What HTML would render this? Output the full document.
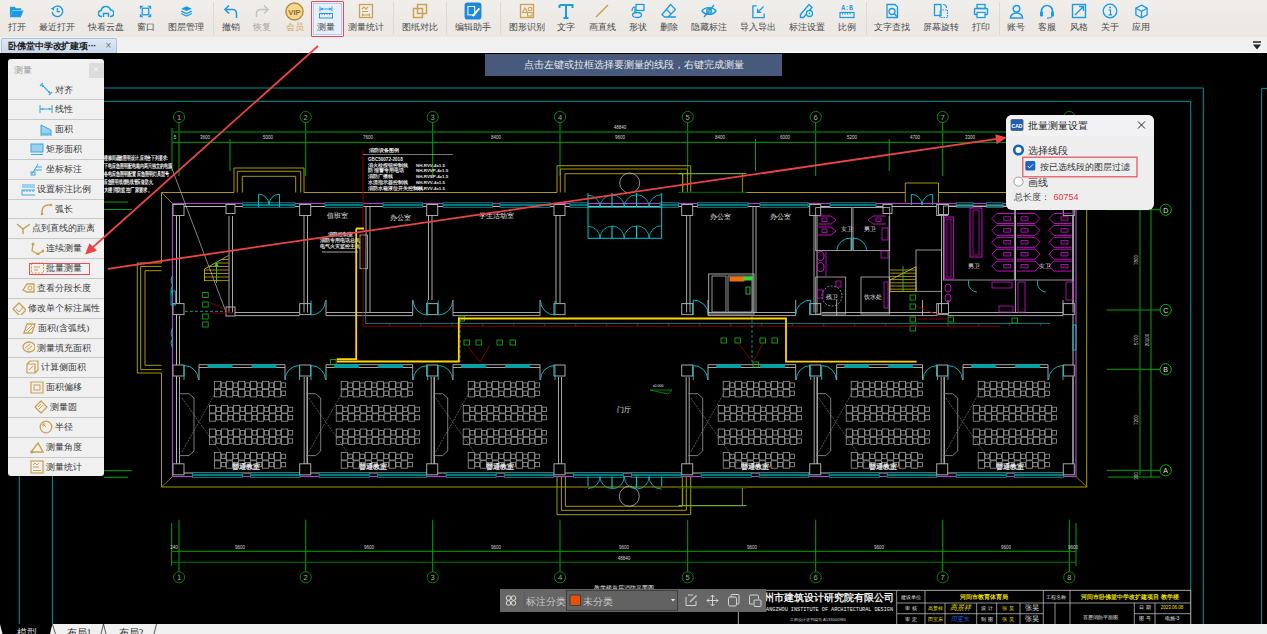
<!DOCTYPE html><html><head><meta charset="utf-8"><style>
*{margin:0;padding:0;box-sizing:border-box}
html,body{width:1267px;height:634px;overflow:hidden;background:#000;font-family:"Liberation Serif",serif}
#tb{position:absolute;left:0;top:0;width:1267px;height:37px;background:linear-gradient(#f0eeeb,#ebe7e2)}
.ic{position:absolute}
.lb{position:absolute;top:21.5px;font-size:9px;line-height:11px;color:#4a4a4a;white-space:nowrap;transform:translateX(-50%)}
.sep{position:absolute;top:2px;width:1px;height:33px;background:#dcd8d2}
#tabs{position:absolute;left:0;top:37px;width:1267px;height:16px;background:#f0f0f0;border-bottom:1px solid #fafafa}
#tab{position:absolute;left:1px;top:0.5px;width:115.5px;height:15.5px;background:linear-gradient(#dfe8f4,#c8d8ec);border:1px solid #a9c1df;border-bottom:none;border-radius:2px 2px 0 0;font-size:9.3px;font-weight:bold;color:#222;padding-left:6px;line-height:14px;white-space:nowrap;letter-spacing:-0.1px}
#tab span{position:absolute;left:103.5px;top:0;color:#777;font-weight:normal;font-family:"Liberation Sans",sans-serif;font-size:10px}
#cv{position:absolute;left:0;top:0}
#panel{position:absolute;left:7.5px;top:59px;width:96.5px;height:417px;background:#f0f0f0;border-radius:3px;overflow:hidden}
#panel .hd{position:absolute;left:6px;top:5px;font-size:9px;color:#9a9a9a}
#panel .cl{position:absolute;left:81px;top:4px;width:15px;height:15px;background:#dcdcdc;color:#f4f4f4;font-size:10px;text-align:center;line-height:14px;font-family:"Liberation Sans",sans-serif}
.row{position:absolute;left:0;width:96.5px;height:19.85px;border-top:1px solid #c8c8c8;font-size:9px;color:#3a3a3a;text-align:center;line-height:19px;white-space:nowrap}
.row svg{vertical-align:middle;margin-right:2px;position:relative;top:-1px}
#banner{position:absolute;left:485px;top:54px;width:297px;height:22px;background:#475a7c;color:#e6e9ef;font-size:10px;line-height:22px;text-align:center}
#dlg{position:absolute;left:1006px;top:115px;width:148px;height:95px;background:#eeeeee;border-radius:6px;overflow:hidden;font-family:"Liberation Sans",sans-serif}
#dlg .tt{position:absolute;left:0;top:0;width:148px;height:21px;background:#f2f2f4}
#bt{position:absolute;left:500px;top:589px;width:266px;height:23px;background:#666666}
#btabs{position:absolute;left:0;top:624px;width:1267px;height:10px;background:#f0f0f0}
</style></head><body>

<div id="tb">
<svg class="ic" style="left:9.0px;top:3.5px" width="15" height="15" viewBox="0 0 16 16"><path d="M1 3h5l1.5 1.5H13v2H4L1 14z" fill="#1a9be6"/><path d="M4 7h11.5l-3 7H1z" fill="#1a9be6"/></svg>
<div class="lb" style="left:16.5px;color:#4a4a4a">打开</div>
<svg class="ic" style="left:49.6px;top:4.0px" width="14" height="14" viewBox="0 0 16 16"><path d="M3.2 5.5A6 6 0 1 1 2.5 9" fill="none" stroke="#1a9be6" stroke-width="1.6"/><path d="M0.8 5l3.5-1.2 .3 3.6z" fill="#1a9be6"/><path d="M8.5 4.5v4.2h3" fill="none" stroke="#1a9be6" stroke-width="1.6"/></svg>
<div class="lb" style="left:56.6px;color:#4a4a4a">最近打开</div>
<svg class="ic" style="left:97.7px;top:3.0px" width="16" height="16" viewBox="0 0 16 16"><path d="M4 13.5H3.5a3 3 0 0 1-.3-6 4.8 4.8 0 0 1 9.3-.5 3.2 3.2 0 0 1 .2 6.5H12" fill="none" stroke="#1a9be6" stroke-width="1.5"/><path d="M5.5 14V10.5h5V14" fill="none" stroke="#1a9be6" stroke-width="1.4"/></svg>
<div class="lb" style="left:105.7px;color:#4a4a4a">快看云盘</div>
<svg class="ic" style="left:139.2px;top:4.5px" width="13" height="13" viewBox="0 0 16 16"><path d="M1 1h4.5L1 5.5zM15 1h-4.5L15 5.5zM1 15h4.5L1 10.5zM15 15h-4.5L15 10.5z" fill="#1a9be6"/><rect x="4" y="4" width="8" height="8" fill="none" stroke="#1a9be6" stroke-width="1.6"/></svg>
<div class="lb" style="left:145.7px;color:#4a4a4a">窗口</div>
<svg class="ic" style="left:179.5px;top:4.5px" width="13" height="13" viewBox="0 0 16 16"><path d="M8 1.5l6.5 3-6.5 3-6.5-3z" fill="#1a9be6"/><path d="M1.5 7.5l6.5 3 6.5-3M1.5 10.5l6.5 3 6.5-3" fill="none" stroke="#1a9be6" stroke-width="1.6"/></svg>
<div class="lb" style="left:186.0px;color:#4a4a4a">图层管理</div>
<div class="sep" style="left:213.0px"></div>
<svg class="ic" style="left:222.7px;top:3.0px" width="16" height="16" viewBox="0 0 16 16"><path d="M2 6.5h7.5a4 4 0 0 1 4 4V15" fill="none" stroke="#1a9be6" stroke-width="1.6"/><path d="M6 2.5L2 6.5l4 4" fill="none" stroke="#1a9be6" stroke-width="1.6"/></svg>
<div class="lb" style="left:230.7px;color:#4a4a4a">撤销</div>
<svg class="ic" style="left:254.0px;top:3.0px" width="16" height="16" viewBox="0 0 16 16"><path d="M14 6.5H6.5a4 4 0 0 0-4 4V14" fill="none" stroke="#c4c4c4" stroke-width="1.6"/><path d="M10 2.5l4 4-4 4" fill="none" stroke="#c4c4c4" stroke-width="1.6"/></svg>
<div class="lb" style="left:262.0px;color:#a8a8a8">恢复</div>
<svg class="ic" style="left:285.0px;top:1.5px" width="19" height="19" viewBox="0 0 16 16"><circle cx="8" cy="8" r="7.2" fill="#f3d890" stroke="#b58a3a" stroke-width="1.2"/><text x="8" y="10.6" font-size="6.5" font-family="Liberation Sans" font-weight="bold" fill="#9a6b1c" text-anchor="middle">VIP</text></svg>
<div class="lb" style="left:294.5px;color:#d0a860">会员</div>
<div style="position:absolute;left:310.5px;top:1px;width:33.5px;height:35.5px;border:1.5px solid #ee4b55;background:#e8effa;border-radius:1px"></div>
<div style="position:absolute;left:312.5px;top:3px;width:29.5px;height:31.5px;border:1px solid #b9cdea"></div>
<svg class="ic" style="left:318.0px;top:3.0px" width="16" height="16" viewBox="0 0 16 16"><path d="M2.5 6h11M2 3.5v5M14 3.5v5" fill="none" stroke="#1a9be6" stroke-width="0.9"/><path d="M2.5 6l2.2-1.4v2.8zM13.5 6l-2.2-1.4v2.8z" fill="#1a9be6"/><rect x="1.5" y="10.5" width="13" height="4.5" fill="none" stroke="#1a9be6" stroke-width="1"/><path d="M4 10.5v1.6M6.5 10.5v1.6M9 10.5v1.6M11.5 10.5v1.6" stroke="#1a9be6" stroke-width="0.8"/></svg>
<div class="lb" style="left:326.0px;color:#4a4a4a">测量</div>
<svg class="ic" style="left:358.0px;top:3.0px" width="16" height="16" viewBox="0 0 16 16"><rect x="1.5" y="1.5" width="13" height="13" fill="none" stroke="#c9a253" stroke-width="1.3"/><path d="M4 6l2-2 2 2 2-2M4 8.5h6M4 12h8M4.5 10.5v3M11.5 10.5v3" fill="none" stroke="#c9a253" stroke-width="1.1"/></svg>
<div class="lb" style="left:366.0px;color:#4a4a4a">测量统计</div>
<div class="sep" style="left:392.5px"></div>
<svg class="ic" style="left:411.5px;top:3.0px" width="16" height="16" viewBox="0 0 16 16"><rect x="1.5" y="5.5" width="9" height="9" fill="none" stroke="#c9a253" stroke-width="1.5"/><rect x="5.5" y="1.5" width="9" height="9" fill="none" stroke="#c9a253" stroke-width="1.5"/></svg>
<div class="lb" style="left:419.5px;color:#4a4a4a">图纸对比</div>
<div class="sep" style="left:446.0px"></div>
<svg class="ic" style="left:464.0px;top:2.0px" width="18" height="18" viewBox="0 0 16 16"><rect x="0.5" y="0.5" width="15" height="15" rx="2.5" fill="#1e88d8"/><rect x="3.5" y="4" width="6" height="7.5" fill="none" stroke="#fff" stroke-width="0.9"/><path d="M7 12l6-7 1.3 1.2-6 7z" fill="#fff"/></svg>
<div class="lb" style="left:473.0px;color:#4a4a4a">编辑助手</div>
<div class="sep" style="left:499.5px"></div>
<svg class="ic" style="left:518.7px;top:3.0px" width="16" height="16" viewBox="0 0 16 16"><rect x="1.5" y="1.5" width="13" height="13" fill="none" stroke="#c9a253" stroke-width="1.3"/><path d="M3.5 9.5l2.5-4.5 2.5 4.5z" fill="none" stroke="#c9a253" stroke-width="1.1"/><circle cx="11" cy="6" r="1.8" fill="none" stroke="#c9a253" stroke-width="1.1"/><rect x="8.5" y="9.5" width="4.5" height="3.5" fill="none" stroke="#c9a253" stroke-width="1.1"/></svg>
<div class="lb" style="left:526.7px;color:#4a4a4a">图形识别</div>
<svg class="ic" style="left:558.0px;top:3.0px" width="16" height="16" viewBox="0 0 16 16"><path d="M1.5 2h13v3M1.5 2v3M8 2v13M5.5 15h5" fill="none" stroke="#1a9be6" stroke-width="2"/></svg>
<div class="lb" style="left:566.0px;color:#4a4a4a">文字</div>
<svg class="ic" style="left:594.0px;top:3.0px" width="16" height="16" viewBox="0 0 16 16"><path d="M2 14L14 2" stroke="#c9a253" stroke-width="1.5"/></svg>
<div class="lb" style="left:602.0px;color:#4a4a4a">画直线</div>
<svg class="ic" style="left:629.5px;top:3.0px" width="16" height="16" viewBox="0 0 16 16"><path d="M2 8c0-3 2-5 3-3s-2 4 1 3" fill="none" stroke="#1a9be6" stroke-width="1.2"/><rect x="6" y="1.5" width="8" height="6" fill="none" stroke="#1a9be6" stroke-width="1.3"/><ellipse cx="7" cy="12" rx="4.5" ry="2.5" fill="none" stroke="#1a9be6" stroke-width="1.3"/></svg>
<div class="lb" style="left:637.5px;color:#4a4a4a">形状</div>
<svg class="ic" style="left:660.7px;top:3.0px" width="16" height="16" viewBox="0 0 16 16"><path d="M9.5 1.5l5 5-7.5 7.5H3.5l-2.5-2.5z" fill="none" stroke="#1a9be6" stroke-width="1.3"/><path d="M5 6l5 5M7 14h8" stroke="#1a9be6" stroke-width="1.3"/></svg>
<div class="lb" style="left:668.7px;color:#4a4a4a">删除</div>
<svg class="ic" style="left:701.0px;top:3.0px" width="16" height="16" viewBox="0 0 16 16"><path d="M1 8c3-4.5 11-4.5 14 0-3 4.5-11 4.5-14 0z" fill="none" stroke="#1a9be6" stroke-width="1.4"/><circle cx="8" cy="8" r="2.3" fill="none" stroke="#1a9be6" stroke-width="1.4"/><path d="M3 14L13 2" stroke="#1a9be6" stroke-width="1.4"/></svg>
<div class="lb" style="left:709.0px;color:#4a4a4a">隐藏标注</div>
<svg class="ic" style="left:750.5px;top:3.5px" width="15" height="15" viewBox="0 0 16 16"><path d="M6 2H2v12.5h12V10" fill="none" stroke="#1a9be6" stroke-width="1.4"/><path d="M13.5 2.5L7 9M7 5v4h4" fill="none" stroke="#1a9be6" stroke-width="1.4"/></svg>
<div class="lb" style="left:758.0px;color:#4a4a4a">导入导出</div>
<svg class="ic" style="left:799.0px;top:3.0px" width="16" height="16" viewBox="0 0 16 16"><path d="M10 1.5l3 3-8.5 10H1.5v-3z" fill="none" stroke="#1a9be6" stroke-width="1.4"/><circle cx="10.5" cy="10.5" r="3" fill="#fff" stroke="#1a9be6" stroke-width="1.3"/><circle cx="10.5" cy="10.5" r="1" fill="#1a9be6"/></svg>
<div class="lb" style="left:807.0px;color:#4a4a4a">标注设置</div>
<svg class="ic" style="left:839.0px;top:3.0px" width="16" height="16" viewBox="0 0 16 16"><text x="8" y="7" font-size="6.5" font-family="Liberation Mono" font-weight="bold" fill="#1a9be6" text-anchor="middle">A:B</text><rect x="1" y="9.5" width="14" height="5" fill="none" stroke="#1a9be6" stroke-width="1.2"/><path d="M3.5 9.5v2M6 9.5v2M8.5 9.5v2M11 9.5v2" stroke="#1a9be6" stroke-width="1"/></svg>
<div class="lb" style="left:847.0px;color:#4a4a4a">比例</div>
<div class="sep" style="left:865.5px"></div>
<svg class="ic" style="left:883.7px;top:3.0px" width="16" height="16" viewBox="0 0 16 16"><path d="M3 1.5h8l2.5 2.5v10.5H3z" fill="none" stroke="#1a9be6" stroke-width="1.3"/><circle cx="8" cy="8.5" r="3" fill="none" stroke="#1a9be6" stroke-width="1.3"/><path d="M10.2 10.7l3.5 3.5" stroke="#1a9be6" stroke-width="1.5"/></svg>
<div class="lb" style="left:891.7px;color:#4a4a4a">文字查找</div>
<svg class="ic" style="left:933.0px;top:3.0px" width="16" height="16" viewBox="0 0 16 16"><rect x="1.5" y="1.5" width="6.5" height="11" fill="none" stroke="#1a9be6" stroke-width="1.3"/><rect x="7" y="7" width="7.5" height="7.5" fill="none" stroke="#1a9be6" stroke-width="1.2" stroke-dasharray="1.5 1"/><path d="M10 1.5a3.5 3.5 0 0 1 3.5 3.5" fill="none" stroke="#1a9be6" stroke-width="1.2"/></svg>
<div class="lb" style="left:941.0px;color:#4a4a4a">屏幕旋转</div>
<svg class="ic" style="left:973.0px;top:3.0px" width="16" height="16" viewBox="0 0 16 16"><rect x="4" y="1.5" width="8" height="4" fill="none" stroke="#1a9be6" stroke-width="1.3"/><rect x="1.5" y="5.5" width="13" height="6" rx="1" fill="none" stroke="#1a9be6" stroke-width="1.4"/><rect x="4" y="9.5" width="8" height="5" fill="#fff" stroke="#1a9be6" stroke-width="1.3"/></svg>
<div class="lb" style="left:981.0px;color:#4a4a4a">打印</div>
<div class="sep" style="left:998.6px"></div>
<svg class="ic" style="left:1008.5px;top:3.5px" width="15" height="15" viewBox="0 0 16 16"><circle cx="8" cy="5" r="3.5" fill="none" stroke="#1a9be6" stroke-width="1.6"/><path d="M1.5 15a6.5 5.5 0 0 1 13 0z" fill="none" stroke="#1a9be6" stroke-width="1.6"/></svg>
<div class="lb" style="left:1016.0px;color:#4a4a4a">账号</div>
<svg class="ic" style="left:1039.0px;top:3.0px" width="16" height="16" viewBox="0 0 16 16"><path d="M2.5 10V8a5.5 5.5 0 0 1 11 0v2" fill="none" stroke="#1a9be6" stroke-width="1.6"/><rect x="1" y="8.5" width="3" height="5" rx="1" fill="#1a9be6"/><rect x="12" y="8.5" width="3" height="5" rx="1" fill="#1a9be6"/><path d="M13 13c0 2-3 2.2-5 2.2" fill="none" stroke="#1a9be6" stroke-width="1.2"/></svg>
<div class="lb" style="left:1047.0px;color:#4a4a4a">客服</div>
<svg class="ic" style="left:1070.5px;top:3.0px" width="16" height="16" viewBox="0 0 16 16"><rect x="1.5" y="1.5" width="13" height="13" fill="none" stroke="#1a9be6" stroke-width="1.4"/><path d="M4 12L12.5 3.5M8 3.5h4.5V8" fill="none" stroke="#1a9be6" stroke-width="1.4"/></svg>
<div class="lb" style="left:1078.5px;color:#4a4a4a">风格</div>
<svg class="ic" style="left:1102.0px;top:3.0px" width="16" height="16" viewBox="0 0 16 16"><circle cx="8" cy="8" r="6.8" fill="none" stroke="#1a9be6" stroke-width="1.3"/><circle cx="8" cy="4.6" r="1" fill="#1a9be6"/><path d="M6.5 7h2v4.5M6.5 11.8h3.5" fill="none" stroke="#1a9be6" stroke-width="1.2"/></svg>
<div class="lb" style="left:1110.0px;color:#4a4a4a">关于</div>
<svg class="ic" style="left:1133.5px;top:3.5px" width="15" height="15" viewBox="0 0 16 16"><path d="M8 1.2l6 3.3v7L8 14.8 2 11.5v-7z" fill="none" stroke="#1a9be6" stroke-width="1.4"/><path d="M2 4.5l6 3.3 6-3.3M8 7.8v7" fill="none" stroke="#1a9be6" stroke-width="1.4"/></svg>
<div class="lb" style="left:1141.0px;color:#4a4a4a">应用</div>
</div>
<div id="tabs"><div id="tab">卧佛堂中学改扩建项<i style="font-style:normal;letter-spacing:-0.5px;font-family:Liberation Sans">···</i><span>×</span></div>
<svg style="position:absolute;left:1252px;top:4px" width="10" height="9"><path d="M1 1h8" stroke="#222" stroke-width="1.5"/><path d="M1 3.5h8L5 8.5z" fill="#222"/></svg></div>
<svg id="cv" width="1267" height="634" style="position:absolute;left:0;top:0" shape-rendering="auto">
<defs>
<pattern id="desk" width="12" height="8" patternUnits="userSpaceOnUse"><rect x="0.5" y="0.5" width="6" height="7" fill="none" stroke="#9a9a9a" stroke-width="0.8"/><rect x="7" y="2" width="4" height="4" fill="none" stroke="#9a9a9a" stroke-width="0.8"/></pattern>
</defs>
<rect x="0" y="53" width="1267" height="571" fill="#000"/>
<g font-family="Liberation Sans, sans-serif">
<path d="M19.3 624V88H1203.3V624" stroke="#009498" stroke-width="1" fill="none" />
<path d="M52.4 624V101.3H1190.7V624" stroke="#009498" stroke-width="1" fill="none" />
<path d="M1267 88.4H1261.6V624" stroke="#009498" stroke-width="1" fill="none" />
<circle cx="179" cy="117" r="5.6" stroke="#009400" stroke-width="0.9" fill="none"/>
<text x="179.0" y="119.8" font-size="7.5" fill="#a8a8a8" text-anchor="middle" >1</text>
<circle cx="179" cy="577.3" r="5.6" stroke="#009400" stroke-width="0.9" fill="none"/>
<text x="179.0" y="580.1" font-size="7.5" fill="#a8a8a8" text-anchor="middle" >1</text>
<line x1="179.0" y1="122.6" x2="179.0" y2="176.0" stroke="#00a400" stroke-width="1" />
<line x1="179.0" y1="519.7" x2="179.0" y2="571.7" stroke="#00a400" stroke-width="1" />
<circle cx="305.7" cy="117" r="5.6" stroke="#009400" stroke-width="0.9" fill="none"/>
<text x="305.7" y="119.8" font-size="7.5" fill="#a8a8a8" text-anchor="middle" >2</text>
<circle cx="305.7" cy="577.3" r="5.6" stroke="#009400" stroke-width="0.9" fill="none"/>
<text x="305.7" y="580.1" font-size="7.5" fill="#a8a8a8" text-anchor="middle" >2</text>
<line x1="305.7" y1="122.6" x2="305.7" y2="176.0" stroke="#00a400" stroke-width="1" />
<line x1="305.7" y1="519.7" x2="305.7" y2="571.7" stroke="#00a400" stroke-width="1" />
<circle cx="432.7" cy="117" r="5.6" stroke="#009400" stroke-width="0.9" fill="none"/>
<text x="432.7" y="119.8" font-size="7.5" fill="#a8a8a8" text-anchor="middle" >3</text>
<circle cx="432.7" cy="577.3" r="5.6" stroke="#009400" stroke-width="0.9" fill="none"/>
<text x="432.7" y="580.1" font-size="7.5" fill="#a8a8a8" text-anchor="middle" >3</text>
<line x1="432.7" y1="122.6" x2="432.7" y2="176.0" stroke="#00a400" stroke-width="1" />
<line x1="432.7" y1="519.7" x2="432.7" y2="571.7" stroke="#00a400" stroke-width="1" />
<circle cx="560" cy="117" r="5.6" stroke="#009400" stroke-width="0.9" fill="none"/>
<text x="560.0" y="119.8" font-size="7.5" fill="#a8a8a8" text-anchor="middle" >4</text>
<circle cx="560" cy="577.3" r="5.6" stroke="#009400" stroke-width="0.9" fill="none"/>
<text x="560.0" y="580.1" font-size="7.5" fill="#a8a8a8" text-anchor="middle" >4</text>
<line x1="560.0" y1="122.6" x2="560.0" y2="176.0" stroke="#00a400" stroke-width="1" />
<line x1="560.0" y1="519.7" x2="560.0" y2="571.7" stroke="#00a400" stroke-width="1" />
<circle cx="687.7" cy="117" r="5.6" stroke="#009400" stroke-width="0.9" fill="none"/>
<text x="687.7" y="119.8" font-size="7.5" fill="#a8a8a8" text-anchor="middle" >5</text>
<circle cx="687.7" cy="577.3" r="5.6" stroke="#009400" stroke-width="0.9" fill="none"/>
<text x="687.7" y="580.1" font-size="7.5" fill="#a8a8a8" text-anchor="middle" >5</text>
<line x1="687.7" y1="122.6" x2="687.7" y2="176.0" stroke="#00a400" stroke-width="1" />
<line x1="687.7" y1="519.7" x2="687.7" y2="571.7" stroke="#00a400" stroke-width="1" />
<circle cx="815.7" cy="117" r="5.6" stroke="#009400" stroke-width="0.9" fill="none"/>
<text x="815.7" y="119.8" font-size="7.5" fill="#a8a8a8" text-anchor="middle" >6</text>
<circle cx="815.7" cy="577.3" r="5.6" stroke="#009400" stroke-width="0.9" fill="none"/>
<text x="815.7" y="580.1" font-size="7.5" fill="#a8a8a8" text-anchor="middle" >6</text>
<line x1="815.7" y1="122.6" x2="815.7" y2="176.0" stroke="#00a400" stroke-width="1" />
<line x1="815.7" y1="519.7" x2="815.7" y2="571.7" stroke="#00a400" stroke-width="1" />
<circle cx="942.7" cy="117" r="5.6" stroke="#009400" stroke-width="0.9" fill="none"/>
<text x="942.7" y="119.8" font-size="7.5" fill="#a8a8a8" text-anchor="middle" >7</text>
<circle cx="942.7" cy="577.3" r="5.6" stroke="#009400" stroke-width="0.9" fill="none"/>
<text x="942.7" y="580.1" font-size="7.5" fill="#a8a8a8" text-anchor="middle" >7</text>
<line x1="942.7" y1="122.6" x2="942.7" y2="176.0" stroke="#00a400" stroke-width="1" />
<line x1="942.7" y1="519.7" x2="942.7" y2="571.7" stroke="#00a400" stroke-width="1" />
<circle cx="1069.3" cy="117" r="5.6" stroke="#009400" stroke-width="0.9" fill="none"/>
<text x="1069.3" y="119.8" font-size="7.5" fill="#a8a8a8" text-anchor="middle" >8</text>
<circle cx="1069.3" cy="577.3" r="5.6" stroke="#009400" stroke-width="0.9" fill="none"/>
<text x="1069.3" y="580.1" font-size="7.5" fill="#a8a8a8" text-anchor="middle" >8</text>
<line x1="1069.3" y1="122.6" x2="1069.3" y2="176.0" stroke="#00a400" stroke-width="1" />
<line x1="1069.3" y1="519.7" x2="1069.3" y2="571.7" stroke="#00a400" stroke-width="1" />
<line x1="172.0" y1="128.0" x2="172.0" y2="171.0" stroke="#00a400" stroke-width="1" />
<line x1="230.0" y1="139.0" x2="230.0" y2="171.0" stroke="#00a400" stroke-width="1" />
<line x1="755.5" y1="139.0" x2="755.5" y2="171.0" stroke="#00a400" stroke-width="1" />
<line x1="889.2" y1="139.0" x2="889.2" y2="171.0" stroke="#00a400" stroke-width="1" />
<line x1="172.0" y1="132.0" x2="1010.0" y2="132.0" stroke="#006c00" stroke-width="1.4" />
<line x1="172.0" y1="142.3" x2="1010.0" y2="142.3" stroke="#00a400" stroke-width="1" />
<line x1="171.7" y1="551.3" x2="1076.0" y2="551.3" stroke="#00a400" stroke-width="1" />
<line x1="171.7" y1="562.3" x2="1076.0" y2="562.3" stroke="#008000" stroke-width="1.1" />
<line x1="171.7" y1="523.0" x2="171.7" y2="566.0" stroke="#00a400" stroke-width="1" />
<line x1="1076.0" y1="523.0" x2="1076.0" y2="566.0" stroke="#00a400" stroke-width="1" />
<text x="175.0" y="139.0" font-size="4.5" fill="#d8d8d8" text-anchor="middle" >5</text>
<text x="205.0" y="139.0" font-size="4.5" fill="#d8d8d8" text-anchor="middle" >3600</text>
<text x="268.0" y="139.0" font-size="4.5" fill="#d8d8d8" text-anchor="middle" >5000</text>
<text x="368.0" y="139.0" font-size="4.5" fill="#d8d8d8" text-anchor="middle" >7600</text>
<text x="496.0" y="139.0" font-size="4.5" fill="#d8d8d8" text-anchor="middle" >8400</text>
<text x="620.0" y="139.0" font-size="4.5" fill="#d8d8d8" text-anchor="middle" >9600</text>
<text x="720.0" y="139.0" font-size="4.5" fill="#d8d8d8" text-anchor="middle" >8400</text>
<text x="785.0" y="139.0" font-size="4.5" fill="#d8d8d8" text-anchor="middle" >6000</text>
<text x="852.0" y="139.0" font-size="4.5" fill="#d8d8d8" text-anchor="middle" >5200</text>
<text x="915.0" y="139.0" font-size="4.5" fill="#d8d8d8" text-anchor="middle" >4700</text>
<text x="970.0" y="139.0" font-size="4.5" fill="#d8d8d8" text-anchor="middle" >3300</text>
<text x="620.0" y="129.0" font-size="4.5" fill="#d8d8d8" text-anchor="middle" >48840</text>
<text x="174.0" y="549.0" font-size="4.5" fill="#d8d8d8" text-anchor="middle" >240</text>
<text x="240.0" y="549.0" font-size="4.5" fill="#d8d8d8" text-anchor="middle" >9600</text>
<text x="369.0" y="549.0" font-size="4.5" fill="#d8d8d8" text-anchor="middle" >9600</text>
<text x="496.0" y="549.0" font-size="4.5" fill="#d8d8d8" text-anchor="middle" >9600</text>
<text x="624.0" y="549.0" font-size="4.5" fill="#d8d8d8" text-anchor="middle" >9600</text>
<text x="752.0" y="549.0" font-size="4.5" fill="#d8d8d8" text-anchor="middle" >9600</text>
<text x="879.0" y="549.0" font-size="4.5" fill="#d8d8d8" text-anchor="middle" >9600</text>
<text x="1006.0" y="549.0" font-size="4.5" fill="#d8d8d8" text-anchor="middle" >9600</text>
<text x="1073.0" y="549.0" font-size="4.5" fill="#d8d8d8" text-anchor="middle" >9600</text>
<text x="624.0" y="560.0" font-size="4.5" fill="#d8d8d8" text-anchor="middle" >48840</text>
<circle cx="1165.7" cy="209.7" r="5.6" stroke="#00b800" stroke-width="1" fill="none"/>
<text x="1165.7" y="212.5" font-size="7" fill="#e0e0e0" text-anchor="middle" >D</text>
<line x1="1106.7" y1="209.7" x2="1160.0" y2="209.7" stroke="#00a400" stroke-width="1" />
<circle cx="1165.7" cy="310" r="5.6" stroke="#00b800" stroke-width="1" fill="none"/>
<text x="1165.7" y="312.8" font-size="7" fill="#e0e0e0" text-anchor="middle" >C</text>
<line x1="1106.7" y1="310.0" x2="1160.0" y2="310.0" stroke="#00a400" stroke-width="1" />
<circle cx="1165.7" cy="369.3" r="5.6" stroke="#00b800" stroke-width="1" fill="none"/>
<text x="1165.7" y="372.1" font-size="7" fill="#e0e0e0" text-anchor="middle" >B</text>
<line x1="1106.7" y1="369.3" x2="1160.0" y2="369.3" stroke="#00a400" stroke-width="1" />
<circle cx="1165.7" cy="470.3" r="5.6" stroke="#00b800" stroke-width="1" fill="none"/>
<text x="1165.7" y="473.1" font-size="7" fill="#e0e0e0" text-anchor="middle" >A</text>
<line x1="1106.7" y1="470.3" x2="1160.0" y2="470.3" stroke="#00a400" stroke-width="1" />
<line x1="1140.0" y1="200.0" x2="1140.0" y2="475.0" stroke="#00a400" stroke-width="1" />
<line x1="1151.0" y1="200.0" x2="1151.0" y2="477.0" stroke="#00a400" stroke-width="1" />
<line x1="1108.0" y1="477.0" x2="1160.0" y2="477.0" stroke="#00a400" stroke-width="1" />
<text x="1138" y="260" font-size="4.5" fill="#d8d8d8" text-anchor="middle" transform="rotate(-90 1138 260)">7800</text>
<text x="1138" y="340" font-size="4.5" fill="#d8d8d8" text-anchor="middle" transform="rotate(-90 1138 340)">5700</text>
<text x="1149" y="340" font-size="4.5" fill="#d8d8d8" text-anchor="middle" transform="rotate(-90 1149 340)">20100</text>
<text x="1138" y="420" font-size="4.5" fill="#d8d8d8" text-anchor="middle" transform="rotate(-90 1138 420)">7200</text>
<text x="1138" y="476" font-size="4.5" fill="#d8d8d8" text-anchor="middle" transform="rotate(-90 1138 476)">300</text>
<text x="390.0" y="325.5" font-size="4" fill="#009498" text-anchor="middle" >L</text>
<text x="421.0" y="325.5" font-size="4" fill="#009498" text-anchor="middle" >L</text>
<text x="452.0" y="325.5" font-size="4" fill="#009498" text-anchor="middle" >L</text>
<text x="483.0" y="325.5" font-size="4" fill="#009498" text-anchor="middle" >L</text>
<text x="514.0" y="325.5" font-size="4" fill="#009498" text-anchor="middle" >L</text>
<text x="545.0" y="325.5" font-size="4" fill="#009498" text-anchor="middle" >L</text>
<text x="576.0" y="325.5" font-size="4" fill="#009498" text-anchor="middle" >L</text>
<text x="607.0" y="325.5" font-size="4" fill="#009498" text-anchor="middle" >L</text>
<text x="638.0" y="325.5" font-size="4" fill="#009498" text-anchor="middle" >L</text>
<text x="669.0" y="325.5" font-size="4" fill="#009498" text-anchor="middle" >L</text>
<text x="700.0" y="325.5" font-size="4" fill="#009498" text-anchor="middle" >L</text>
<text x="731.0" y="325.5" font-size="4" fill="#009498" text-anchor="middle" >L</text>
<text x="762.0" y="325.5" font-size="4" fill="#009498" text-anchor="middle" >L</text>
<text x="793.0" y="325.5" font-size="4" fill="#009498" text-anchor="middle" >L</text>
<text x="824.0" y="325.5" font-size="4" fill="#009498" text-anchor="middle" >L</text>
<text x="855.0" y="325.5" font-size="4" fill="#009498" text-anchor="middle" >L</text>
<text x="886.0" y="325.5" font-size="4" fill="#009498" text-anchor="middle" >L</text>
<text x="917.0" y="325.5" font-size="4" fill="#009498" text-anchor="middle" >L</text>
<text x="948.0" y="325.5" font-size="4" fill="#009498" text-anchor="middle" >L</text>
<text x="979.0" y="325.5" font-size="4" fill="#009498" text-anchor="middle" >L</text>
<text x="1010.0" y="325.5" font-size="4" fill="#009498" text-anchor="middle" >L</text>
<text x="1041.0" y="325.5" font-size="4" fill="#009498" text-anchor="middle" >L</text>
<path d="M161.5 192.5H234M304 192.5H557M690.7 192.5H905M938.3 192.5H1086.7V487H161.5V373M161.5 263V192.5" stroke="#a89a00" stroke-width="1" fill="none" />
<path d="M161.5 192.5L172.5 203.5M1086.7 192.5L1076 203.5M161.5 487L172.5 476.5M1086.7 487L1076 476.5" stroke="#a89a00" stroke-width="0.8" fill="none" />
<path d="M234.0 192.5V168.0H304.0V192.5" stroke="#a89a00" stroke-width="1" fill="none" />
<path d="M237.3 192.5V171.3H300.7V192.5" stroke="#a89a00" stroke-width="1" fill="none" />
<path d="M242.3 192.5V176.3H295.7V192.5" stroke="#a89a00" stroke-width="1" fill="none" />
<path d="M557.0 192.5V165.7H690.7V192.5" stroke="#a89a00" stroke-width="1" fill="none" />
<path d="M560.3 192.5V169.0H687.4V192.5" stroke="#a89a00" stroke-width="1" fill="none" />
<path d="M565.0 192.5V173.7H682.7V192.5" stroke="#a89a00" stroke-width="1" fill="none" />
<path d="M905.3 202.5V183H938.5V202.5" stroke="#a89a00" stroke-width="1" fill="none" />
<path d="M557.0 476.5V514.7H690.7V476.5" stroke="#a89a00" stroke-width="1" fill="none" />
<path d="M561.4 476.5V510.3H686.3V476.5" stroke="#a89a00" stroke-width="1" fill="none" />
<path d="M565.4 476.5V506.3H682.3V476.5" stroke="#a89a00" stroke-width="1" fill="none" />
<path d="M161.5 263.0H137.3V373.0H161.5" stroke="#a89a00" stroke-width="1" fill="none" />
<path d="M161.5 266.4H140.7V369.6H161.5" stroke="#a89a00" stroke-width="1" fill="none" />
<path d="M161.5 270.7H145.0V365.3H161.5" stroke="#a89a00" stroke-width="1" fill="none" />
<line x1="678.5" y1="173.7" x2="746.5" y2="173.7" stroke="#80d040" stroke-width="1" />
<line x1="678.5" y1="192.3" x2="746.5" y2="192.3" stroke="#005a00" stroke-width="1.2" />
<path d="M682.7 173.7V192.3M742.4 173.7V192.3" stroke="#a89a00" stroke-width="0.9" fill="none" />
<line x1="678.5" y1="488.0" x2="746.5" y2="488.0" stroke="#005a00" stroke-width="1.2" />
<line x1="678.5" y1="505.7" x2="746.5" y2="505.7" stroke="#80d040" stroke-width="1" />
<path d="M682.7 488V505.7M742.4 488V505.7" stroke="#a89a00" stroke-width="0.9" fill="none" />
<circle cx="629.7" cy="183" r="10" stroke="#c8c8c8" stroke-width="0.7" fill="none"/>
<circle cx="629.3" cy="496.3" r="10" stroke="#c8c8c8" stroke-width="0.7" fill="none"/>
<rect x="172.5" y="203.5" width="903.5" height="273.0" stroke="#a848c8" stroke-width="1.2" fill="none" />
<path d="M176.5 206.5H1073V473H176.5Z" stroke="#b8b8b8" stroke-width="1" fill="none" />
<rect x="242.7" y="202.8" width="52.3" height="4.5" stroke="#00a0a8" stroke-width="0.8" fill="#000" />
<line x1="242.7" y1="205.0" x2="295.0" y2="205.0" stroke="#00a0a8" stroke-width="1.4" />
<rect x="325.0" y="202.8" width="38.0" height="4.5" stroke="#00a0a8" stroke-width="0.8" fill="#000" />
<line x1="325.0" y1="205.0" x2="363.0" y2="205.0" stroke="#00a0a8" stroke-width="1.4" />
<rect x="383.0" y="202.8" width="39.7" height="4.5" stroke="#00a0a8" stroke-width="0.8" fill="#000" />
<line x1="383.0" y1="205.0" x2="422.7" y2="205.0" stroke="#00a0a8" stroke-width="1.4" />
<rect x="443.0" y="202.8" width="49.7" height="4.5" stroke="#00a0a8" stroke-width="0.8" fill="#000" />
<line x1="443.0" y1="205.0" x2="492.7" y2="205.0" stroke="#00a0a8" stroke-width="1.4" />
<rect x="500.0" y="202.8" width="50.0" height="4.5" stroke="#00a0a8" stroke-width="0.8" fill="#000" />
<line x1="500.0" y1="205.0" x2="550.0" y2="205.0" stroke="#00a0a8" stroke-width="1.4" />
<rect x="570.0" y="202.8" width="18.0" height="4.5" stroke="#00a0a8" stroke-width="0.8" fill="#000" />
<line x1="570.0" y1="205.0" x2="588.0" y2="205.0" stroke="#00a0a8" stroke-width="1.4" />
<rect x="660.0" y="202.8" width="18.5" height="4.5" stroke="#00a0a8" stroke-width="0.8" fill="#000" />
<line x1="660.0" y1="205.0" x2="678.5" y2="205.0" stroke="#00a0a8" stroke-width="1.4" />
<rect x="697.6" y="202.8" width="50.4" height="4.5" stroke="#00a0a8" stroke-width="0.8" fill="#000" />
<line x1="697.6" y1="205.0" x2="748.0" y2="205.0" stroke="#00a0a8" stroke-width="1.4" />
<rect x="760.0" y="202.8" width="48.0" height="4.5" stroke="#00a0a8" stroke-width="0.8" fill="#000" />
<line x1="760.0" y1="205.0" x2="808.0" y2="205.0" stroke="#00a0a8" stroke-width="1.4" />
<rect x="830.0" y="202.8" width="46.0" height="4.5" stroke="#00a0a8" stroke-width="0.8" fill="#000" />
<line x1="830.0" y1="205.0" x2="876.0" y2="205.0" stroke="#00a0a8" stroke-width="1.4" />
<rect x="956.3" y="202.8" width="16.7" height="4.5" stroke="#00a0a8" stroke-width="0.8" fill="#000" />
<line x1="956.3" y1="205.0" x2="973.0" y2="205.0" stroke="#00a0a8" stroke-width="1.4" />
<rect x="986.5" y="202.8" width="16.5" height="4.5" stroke="#00a0a8" stroke-width="0.8" fill="#000" />
<line x1="986.5" y1="205.0" x2="1003.0" y2="205.0" stroke="#00a0a8" stroke-width="1.4" />
<rect x="192.5" y="472.8" width="50.0" height="4.5" stroke="#00a0a8" stroke-width="0.8" fill="#000" />
<line x1="192.5" y1="475.0" x2="242.5" y2="475.0" stroke="#00a0a8" stroke-width="1.4" />
<rect x="250.6" y="472.8" width="49.4" height="4.5" stroke="#00a0a8" stroke-width="0.8" fill="#000" />
<line x1="250.6" y1="475.0" x2="300.0" y2="475.0" stroke="#00a0a8" stroke-width="1.4" />
<rect x="319.2" y="472.8" width="50.0" height="4.5" stroke="#00a0a8" stroke-width="0.8" fill="#000" />
<line x1="319.2" y1="475.0" x2="369.2" y2="475.0" stroke="#00a0a8" stroke-width="1.4" />
<rect x="377.3" y="472.8" width="49.4" height="4.5" stroke="#00a0a8" stroke-width="0.8" fill="#000" />
<line x1="377.3" y1="475.0" x2="426.7" y2="475.0" stroke="#00a0a8" stroke-width="1.4" />
<rect x="446.2" y="472.8" width="50.0" height="4.5" stroke="#00a0a8" stroke-width="0.8" fill="#000" />
<line x1="446.2" y1="475.0" x2="496.2" y2="475.0" stroke="#00a0a8" stroke-width="1.4" />
<rect x="504.3" y="472.8" width="49.4" height="4.5" stroke="#00a0a8" stroke-width="0.8" fill="#000" />
<line x1="504.3" y1="475.0" x2="553.7" y2="475.0" stroke="#00a0a8" stroke-width="1.4" />
<rect x="573.5" y="472.8" width="50.0" height="4.5" stroke="#00a0a8" stroke-width="0.8" fill="#000" />
<line x1="573.5" y1="475.0" x2="623.5" y2="475.0" stroke="#00a0a8" stroke-width="1.4" />
<rect x="631.6" y="472.8" width="49.4" height="4.5" stroke="#00a0a8" stroke-width="0.8" fill="#000" />
<line x1="631.6" y1="475.0" x2="681.0" y2="475.0" stroke="#00a0a8" stroke-width="1.4" />
<rect x="701.2" y="472.8" width="50.0" height="4.5" stroke="#00a0a8" stroke-width="0.8" fill="#000" />
<line x1="701.2" y1="475.0" x2="751.2" y2="475.0" stroke="#00a0a8" stroke-width="1.4" />
<rect x="759.3" y="472.8" width="49.4" height="4.5" stroke="#00a0a8" stroke-width="0.8" fill="#000" />
<line x1="759.3" y1="475.0" x2="808.7" y2="475.0" stroke="#00a0a8" stroke-width="1.4" />
<rect x="829.2" y="472.8" width="50.0" height="4.5" stroke="#00a0a8" stroke-width="0.8" fill="#000" />
<line x1="829.2" y1="475.0" x2="879.2" y2="475.0" stroke="#00a0a8" stroke-width="1.4" />
<rect x="887.3" y="472.8" width="49.4" height="4.5" stroke="#00a0a8" stroke-width="0.8" fill="#000" />
<line x1="887.3" y1="475.0" x2="936.7" y2="475.0" stroke="#00a0a8" stroke-width="1.4" />
<rect x="956.2" y="472.8" width="50.0" height="4.5" stroke="#00a0a8" stroke-width="0.8" fill="#000" />
<line x1="956.2" y1="475.0" x2="1006.2" y2="475.0" stroke="#00a0a8" stroke-width="1.4" />
<rect x="1014.3" y="472.8" width="49.4" height="4.5" stroke="#00a0a8" stroke-width="0.8" fill="#000" />
<line x1="1014.3" y1="475.0" x2="1063.7" y2="475.0" stroke="#00a0a8" stroke-width="1.4" />
<path d="M235 312.5H299.5M235 315.6H299.5" stroke="#b8b8b8" stroke-width="0.9" fill="none" />
<path d="M311 312.5H311M311 315.6H311" stroke="#b8b8b8" stroke-width="0.9" fill="none" />
<path d="M326 312.5H412.7M326 315.6H412.7" stroke="#b8b8b8" stroke-width="0.9" fill="none" />
<path d="M453 312.5H540M453 315.6H540" stroke="#b8b8b8" stroke-width="0.9" fill="none" />
<path d="M708 312.5H795.7M708 315.6H795.7" stroke="#b8b8b8" stroke-width="0.9" fill="none" />
<path d="M821.7 312.5H937.5M821.7 315.6H937.5" stroke="#b8b8b8" stroke-width="0.9" fill="none" />
<path d="M948 312.5H1063M948 315.6H1063" stroke="#b8b8b8" stroke-width="0.9" fill="none" />
<path d="M199 364.7H285M199 367.5H285" stroke="#b8b8b8" stroke-width="0.9" fill="none" />
<path d="M326 364.7H412.7M326 367.5H412.7" stroke="#b8b8b8" stroke-width="0.9" fill="none" />
<path d="M453 364.7H540M453 367.5H540" stroke="#b8b8b8" stroke-width="0.9" fill="none" />
<path d="M708 364.7H795.7M708 367.5H795.7" stroke="#b8b8b8" stroke-width="0.9" fill="none" />
<path d="M836.7 364.7H922.5M836.7 367.5H922.5" stroke="#b8b8b8" stroke-width="0.9" fill="none" />
<path d="M963 364.7H1048M963 367.5H1048" stroke="#b8b8b8" stroke-width="0.9" fill="none" />
<path d="M199 380V364.7M285 380V364.7" stroke="#b8b8b8" stroke-width="0.9" fill="none" />
<path d="M326 380V364.7M412.7 380V364.7" stroke="#b8b8b8" stroke-width="0.9" fill="none" />
<path d="M708 380V364.7M795.7 380V364.7" stroke="#b8b8b8" stroke-width="0.9" fill="none" />
<path d="M836.7 380V364.7M922.5 380V364.7" stroke="#b8b8b8" stroke-width="0.9" fill="none" />
<path d="M963 380V364.7M1048 380V364.7" stroke="#b8b8b8" stroke-width="0.9" fill="none" />
<path d="M453 380V364.7M540 380V364.7" stroke="#b8b8b8" stroke-width="0.9" fill="none" />
<path d="M326 300V315.6M412.7 300V315.6" stroke="#b8b8b8" stroke-width="0.9" fill="none" />
<path d="M453 300V315.6M540 300V315.6" stroke="#b8b8b8" stroke-width="0.9" fill="none" />
<path d="M708 300V315.6M795.7 300V315.6" stroke="#b8b8b8" stroke-width="0.9" fill="none" />
<path d="M836.7 300V315.6M922.5 300V315.6" stroke="#b8b8b8" stroke-width="0.9" fill="none" />
<path d="M948 300V315.6M1063 300V315.6" stroke="#b8b8b8" stroke-width="0.9" fill="none" />
<rect x="208.0" y="364.7" width="24.0" height="2.8" stroke="#00a0a8" stroke-width="0.8" fill="#00a0a8" />
<rect x="252.0" y="364.7" width="24.0" height="2.8" stroke="#00a0a8" stroke-width="0.8" fill="#00a0a8" />
<rect x="334.7" y="364.7" width="24.0" height="2.8" stroke="#00a0a8" stroke-width="0.8" fill="#00a0a8" />
<rect x="378.7" y="364.7" width="24.0" height="2.8" stroke="#00a0a8" stroke-width="0.8" fill="#00a0a8" />
<rect x="461.7" y="364.7" width="24.0" height="2.8" stroke="#00a0a8" stroke-width="0.8" fill="#00a0a8" />
<rect x="505.7" y="364.7" width="24.0" height="2.8" stroke="#00a0a8" stroke-width="0.8" fill="#00a0a8" />
<rect x="716.7" y="364.7" width="24.0" height="2.8" stroke="#00a0a8" stroke-width="0.8" fill="#00a0a8" />
<rect x="760.7" y="364.7" width="24.0" height="2.8" stroke="#00a0a8" stroke-width="0.8" fill="#00a0a8" />
<rect x="844.7" y="364.7" width="24.0" height="2.8" stroke="#00a0a8" stroke-width="0.8" fill="#00a0a8" />
<rect x="888.7" y="364.7" width="24.0" height="2.8" stroke="#00a0a8" stroke-width="0.8" fill="#00a0a8" />
<rect x="971.7" y="364.7" width="24.0" height="2.8" stroke="#00a0a8" stroke-width="0.8" fill="#00a0a8" />
<rect x="1015.7" y="364.7" width="24.0" height="2.8" stroke="#00a0a8" stroke-width="0.8" fill="#00a0a8" />
<rect x="173.0" y="204.5" width="11.0" height="11.0" stroke="#a8a8a8" stroke-width="1" fill="#000" />
<rect x="173.0" y="303.6" width="11.0" height="11.0" stroke="#a8a8a8" stroke-width="1" fill="#000" />
<rect x="173.0" y="365.0" width="11.0" height="11.0" stroke="#a8a8a8" stroke-width="1" fill="#000" />
<rect x="173.0" y="463.8" width="11.0" height="11.0" stroke="#a8a8a8" stroke-width="1" fill="#000" />
<rect x="299.7" y="204.5" width="11.0" height="11.0" stroke="#a8a8a8" stroke-width="1" fill="#000" />
<rect x="299.7" y="303.6" width="11.0" height="11.0" stroke="#a8a8a8" stroke-width="1" fill="#000" />
<rect x="299.7" y="365.0" width="11.0" height="11.0" stroke="#a8a8a8" stroke-width="1" fill="#000" />
<rect x="299.7" y="463.8" width="11.0" height="11.0" stroke="#a8a8a8" stroke-width="1" fill="#000" />
<rect x="426.7" y="204.5" width="11.0" height="11.0" stroke="#a8a8a8" stroke-width="1" fill="#000" />
<rect x="426.7" y="303.6" width="11.0" height="11.0" stroke="#a8a8a8" stroke-width="1" fill="#000" />
<rect x="426.7" y="365.0" width="11.0" height="11.0" stroke="#a8a8a8" stroke-width="1" fill="#000" />
<rect x="426.7" y="463.8" width="11.0" height="11.0" stroke="#a8a8a8" stroke-width="1" fill="#000" />
<rect x="554.0" y="204.5" width="11.0" height="11.0" stroke="#a8a8a8" stroke-width="1" fill="#000" />
<rect x="554.0" y="303.6" width="11.0" height="11.0" stroke="#a8a8a8" stroke-width="1" fill="#000" />
<rect x="554.0" y="365.0" width="11.0" height="11.0" stroke="#a8a8a8" stroke-width="1" fill="#000" />
<rect x="554.0" y="463.8" width="11.0" height="11.0" stroke="#a8a8a8" stroke-width="1" fill="#000" />
<rect x="681.7" y="204.5" width="11.0" height="11.0" stroke="#a8a8a8" stroke-width="1" fill="#000" />
<rect x="681.7" y="303.6" width="11.0" height="11.0" stroke="#a8a8a8" stroke-width="1" fill="#000" />
<rect x="681.7" y="365.0" width="11.0" height="11.0" stroke="#a8a8a8" stroke-width="1" fill="#000" />
<rect x="681.7" y="463.8" width="11.0" height="11.0" stroke="#a8a8a8" stroke-width="1" fill="#000" />
<rect x="809.7" y="204.5" width="11.0" height="11.0" stroke="#a8a8a8" stroke-width="1" fill="#000" />
<rect x="809.7" y="303.6" width="11.0" height="11.0" stroke="#a8a8a8" stroke-width="1" fill="#000" />
<rect x="809.7" y="365.0" width="11.0" height="11.0" stroke="#a8a8a8" stroke-width="1" fill="#000" />
<rect x="809.7" y="463.8" width="11.0" height="11.0" stroke="#a8a8a8" stroke-width="1" fill="#000" />
<rect x="936.7" y="204.5" width="11.0" height="11.0" stroke="#a8a8a8" stroke-width="1" fill="#000" />
<rect x="936.7" y="303.6" width="11.0" height="11.0" stroke="#a8a8a8" stroke-width="1" fill="#000" />
<rect x="936.7" y="365.0" width="11.0" height="11.0" stroke="#a8a8a8" stroke-width="1" fill="#000" />
<rect x="936.7" y="463.8" width="11.0" height="11.0" stroke="#a8a8a8" stroke-width="1" fill="#000" />
<rect x="1063.3" y="204.5" width="11.0" height="11.0" stroke="#a8a8a8" stroke-width="1" fill="#000" />
<rect x="1063.3" y="303.6" width="11.0" height="11.0" stroke="#a8a8a8" stroke-width="1" fill="#000" />
<rect x="1063.3" y="365.0" width="11.0" height="11.0" stroke="#a8a8a8" stroke-width="1" fill="#000" />
<rect x="1063.3" y="463.8" width="11.0" height="11.0" stroke="#a8a8a8" stroke-width="1" fill="#000" />
<rect x="226.0" y="204.5" width="9.0" height="9.0" stroke="#a8a8a8" stroke-width="1" fill="#000" />
<rect x="226.0" y="307.0" width="9.0" height="9.0" stroke="#a8a8a8" stroke-width="1" fill="#000" />
<rect x="883.0" y="204.5" width="9.0" height="9.0" stroke="#a8a8a8" stroke-width="1" fill="#000" />
<rect x="938.5" y="204.5" width="10.0" height="10.0" stroke="#a8a8a8" stroke-width="1" fill="#000" />
<rect x="938.5" y="303.6" width="10.0" height="10.0" stroke="#a8a8a8" stroke-width="1" fill="#000" />
<line x1="229.0" y1="216.0" x2="229.0" y2="312.5" stroke="#b8b8b8" stroke-width="0.9" />
<line x1="232.5" y1="216.0" x2="232.5" y2="312.5" stroke="#b8b8b8" stroke-width="0.9" />
<line x1="304.0" y1="216.0" x2="304.0" y2="312.5" stroke="#b8b8b8" stroke-width="0.9" />
<line x1="307.5" y1="216.0" x2="307.5" y2="312.5" stroke="#b8b8b8" stroke-width="0.9" />
<line x1="686.6" y1="216.0" x2="686.6" y2="312.5" stroke="#b8b8b8" stroke-width="0.9" />
<line x1="690.0" y1="216.0" x2="690.0" y2="312.5" stroke="#b8b8b8" stroke-width="0.9" />
<line x1="814.0" y1="216.0" x2="814.0" y2="312.5" stroke="#b8b8b8" stroke-width="0.9" />
<line x1="817.0" y1="216.0" x2="817.0" y2="312.5" stroke="#b8b8b8" stroke-width="0.9" />
<line x1="889.2" y1="216.0" x2="889.2" y2="312.5" stroke="#b8b8b8" stroke-width="0.9" />
<line x1="941.5" y1="216.0" x2="941.5" y2="312.5" stroke="#b8b8b8" stroke-width="0.9" />
<line x1="1015.4" y1="216.0" x2="1015.4" y2="312.5" stroke="#b8b8b8" stroke-width="0.9" />
<line x1="1073.0" y1="216.0" x2="1073.0" y2="312.5" stroke="#b8b8b8" stroke-width="0.9" />
<line x1="366.0" y1="206.5" x2="366.0" y2="312.5" stroke="#b8b8b8" stroke-width="0.9" />
<line x1="370.0" y1="206.5" x2="370.0" y2="312.5" stroke="#b8b8b8" stroke-width="0.9" />
<line x1="753.0" y1="206.5" x2="753.0" y2="312.5" stroke="#b8b8b8" stroke-width="0.9" />
<line x1="756.0" y1="206.5" x2="756.0" y2="312.5" stroke="#b8b8b8" stroke-width="0.9" />
<line x1="179.5" y1="216.0" x2="179.5" y2="303.6" stroke="#b8b8b8" stroke-width="0.9" />
<line x1="179.5" y1="315.6" x2="179.5" y2="364.7" stroke="#b8b8b8" stroke-width="0.9" />
<line x1="179.5" y1="377.0" x2="179.5" y2="463.8" stroke="#b8b8b8" stroke-width="0.9" />
<rect x="360.0" y="235.0" width="7.5" height="33.7" stroke="#b8b8b8" stroke-width="0.8" fill="none" />
<path d="M836.7 250.6A14 14 0 0 1 851 238M853 238A14 14 0 0 1 867 250.6" stroke="#00c8d0" stroke-width="0.9" fill="none" />
<path d="M851 238V250.6M853 238V250.6" stroke="#00c8d0" stroke-width="0.9" fill="none" />
<line x1="556.0" y1="216.0" x2="556.0" y2="303.0" stroke="#b8b8b8" stroke-width="0.9" />
<line x1="560.0" y1="216.0" x2="560.0" y2="303.0" stroke="#b8b8b8" stroke-width="0.9" />
<line x1="428.5" y1="216.0" x2="428.5" y2="300.0" stroke="#b8b8b8" stroke-width="0.9" />
<line x1="432.0" y1="216.0" x2="432.0" y2="300.0" stroke="#b8b8b8" stroke-width="0.9" />
<line x1="304.2" y1="377.0" x2="304.2" y2="464.0" stroke="#b8b8b8" stroke-width="0.9" />
<line x1="307.2" y1="377.0" x2="307.2" y2="464.0" stroke="#b8b8b8" stroke-width="1.4" />
<line x1="431.2" y1="377.0" x2="431.2" y2="464.0" stroke="#b8b8b8" stroke-width="0.9" />
<line x1="434.2" y1="377.0" x2="434.2" y2="464.0" stroke="#b8b8b8" stroke-width="1.4" />
<line x1="558.5" y1="377.0" x2="558.5" y2="464.0" stroke="#b8b8b8" stroke-width="0.9" />
<line x1="561.5" y1="377.0" x2="561.5" y2="464.0" stroke="#b8b8b8" stroke-width="0.9" />
<line x1="686.2" y1="377.0" x2="686.2" y2="464.0" stroke="#b8b8b8" stroke-width="0.9" />
<line x1="689.2" y1="377.0" x2="689.2" y2="464.0" stroke="#b8b8b8" stroke-width="0.9" />
<line x1="814.2" y1="377.0" x2="814.2" y2="464.0" stroke="#b8b8b8" stroke-width="0.9" />
<line x1="817.2" y1="377.0" x2="817.2" y2="464.0" stroke="#b8b8b8" stroke-width="1.4" />
<line x1="941.2" y1="377.0" x2="941.2" y2="464.0" stroke="#b8b8b8" stroke-width="0.9" />
<line x1="944.2" y1="377.0" x2="944.2" y2="464.0" stroke="#b8b8b8" stroke-width="1.4" />
<path d="M184 380V365.5A14.5 14.5 0 0 1 198.5 380" stroke="#00c8d0" stroke-width="0.9" fill="none" />
<path d="M299.5 380V365.5A14.5 14.5 0 0 0 285.0 380" stroke="#00c8d0" stroke-width="0.9" fill="none" />
<path d="M311 380V365.5A14.5 14.5 0 0 1 325.5 380" stroke="#00c8d0" stroke-width="0.9" fill="none" />
<path d="M427.7 380V365.5A14.5 14.5 0 0 0 413.2 380" stroke="#00c8d0" stroke-width="0.9" fill="none" />
<path d="M438.2 380V365.5A14.5 14.5 0 0 1 452.7 380" stroke="#00c8d0" stroke-width="0.9" fill="none" />
<path d="M555 380V365.5A14.5 14.5 0 0 0 540.5 380" stroke="#00c8d0" stroke-width="0.9" fill="none" />
<path d="M693.3 380V365.5A14.5 14.5 0 0 1 707.8 380" stroke="#00c8d0" stroke-width="0.9" fill="none" />
<path d="M810.7 380V365.5A14.5 14.5 0 0 0 796.2 380" stroke="#00c8d0" stroke-width="0.9" fill="none" />
<path d="M821.7 380V365.5A14.5 14.5 0 0 1 836.2 380" stroke="#00c8d0" stroke-width="0.9" fill="none" />
<path d="M937.5 380V365.5A14.5 14.5 0 0 0 923.0 380" stroke="#00c8d0" stroke-width="0.9" fill="none" />
<path d="M948 380V365.5A14.5 14.5 0 0 1 962.5 380" stroke="#00c8d0" stroke-width="0.9" fill="none" />
<path d="M1063 380V365.5A14.5 14.5 0 0 0 1048.5 380" stroke="#00c8d0" stroke-width="0.9" fill="none" />
<path d="M311 300.5V315.0A14.5 14.5 0 0 0 325.5 300.5" stroke="#00c8d0" stroke-width="0.9" fill="none" />
<path d="M427.7 300.5V315.0A14.5 14.5 0 0 1 413.2 300.5" stroke="#00c8d0" stroke-width="0.9" fill="none" />
<path d="M438.2 300.5V315.0A14.5 14.5 0 0 0 452.7 300.5" stroke="#00c8d0" stroke-width="0.9" fill="none" />
<path d="M555 300.5V315.0A14.5 14.5 0 0 1 540.5 300.5" stroke="#00c8d0" stroke-width="0.9" fill="none" />
<path d="M693.3 315V300A15 15 0 0 1 708.3 315" stroke="#00c8d0" stroke-width="0.9" fill="none" />
<path d="M810.7 315V300A15 15 0 0 0 795.7 315" stroke="#00c8d0" stroke-width="0.9" fill="none" />
<rect x="214.5" y="381.3" width="6.2" height="7.4" fill="none" stroke="#a4a4a4" stroke-width="0.75"/>
<rect x="221.3" y="382.9" width="4.4" height="4.4" fill="none" stroke="#a4a4a4" stroke-width="0.75"/>
<rect x="226.5" y="381.3" width="6.2" height="7.4" fill="none" stroke="#a4a4a4" stroke-width="0.75"/>
<rect x="233.3" y="382.9" width="4.4" height="4.4" fill="none" stroke="#a4a4a4" stroke-width="0.75"/>
<rect x="238.5" y="381.3" width="6.2" height="7.4" fill="none" stroke="#a4a4a4" stroke-width="0.75"/>
<rect x="245.3" y="382.9" width="4.4" height="4.4" fill="none" stroke="#a4a4a4" stroke-width="0.75"/>
<rect x="250.5" y="381.3" width="6.2" height="7.4" fill="none" stroke="#a4a4a4" stroke-width="0.75"/>
<rect x="257.3" y="382.9" width="4.4" height="4.4" fill="none" stroke="#a4a4a4" stroke-width="0.75"/>
<rect x="262.5" y="381.3" width="6.2" height="7.4" fill="none" stroke="#a4a4a4" stroke-width="0.75"/>
<rect x="269.3" y="382.9" width="4.4" height="4.4" fill="none" stroke="#a4a4a4" stroke-width="0.75"/>
<rect x="274.5" y="381.3" width="6.2" height="7.4" fill="none" stroke="#a4a4a4" stroke-width="0.75"/>
<rect x="281.3" y="382.9" width="4.4" height="4.4" fill="none" stroke="#a4a4a4" stroke-width="0.75"/>
<rect x="214.5" y="389.5" width="6.2" height="7.4" fill="none" stroke="#a4a4a4" stroke-width="0.75"/>
<rect x="221.3" y="391.1" width="4.4" height="4.4" fill="none" stroke="#a4a4a4" stroke-width="0.75"/>
<rect x="226.5" y="389.5" width="6.2" height="7.4" fill="none" stroke="#a4a4a4" stroke-width="0.75"/>
<rect x="233.3" y="391.1" width="4.4" height="4.4" fill="none" stroke="#a4a4a4" stroke-width="0.75"/>
<rect x="238.5" y="389.5" width="6.2" height="7.4" fill="none" stroke="#a4a4a4" stroke-width="0.75"/>
<rect x="245.3" y="391.1" width="4.4" height="4.4" fill="none" stroke="#a4a4a4" stroke-width="0.75"/>
<rect x="250.5" y="389.5" width="6.2" height="7.4" fill="none" stroke="#a4a4a4" stroke-width="0.75"/>
<rect x="257.3" y="391.1" width="4.4" height="4.4" fill="none" stroke="#a4a4a4" stroke-width="0.75"/>
<rect x="262.5" y="389.5" width="6.2" height="7.4" fill="none" stroke="#a4a4a4" stroke-width="0.75"/>
<rect x="269.3" y="391.1" width="4.4" height="4.4" fill="none" stroke="#a4a4a4" stroke-width="0.75"/>
<rect x="274.5" y="389.5" width="6.2" height="7.4" fill="none" stroke="#a4a4a4" stroke-width="0.75"/>
<rect x="281.3" y="391.1" width="4.4" height="4.4" fill="none" stroke="#a4a4a4" stroke-width="0.75"/>
<rect x="209.5" y="405.6" width="6.2" height="7.4" fill="none" stroke="#a4a4a4" stroke-width="0.75"/>
<rect x="216.3" y="407.2" width="4.4" height="4.4" fill="none" stroke="#a4a4a4" stroke-width="0.75"/>
<rect x="221.5" y="405.6" width="6.2" height="7.4" fill="none" stroke="#a4a4a4" stroke-width="0.75"/>
<rect x="228.3" y="407.2" width="4.4" height="4.4" fill="none" stroke="#a4a4a4" stroke-width="0.75"/>
<rect x="233.5" y="405.6" width="6.2" height="7.4" fill="none" stroke="#a4a4a4" stroke-width="0.75"/>
<rect x="240.3" y="407.2" width="4.4" height="4.4" fill="none" stroke="#a4a4a4" stroke-width="0.75"/>
<rect x="245.5" y="405.6" width="6.2" height="7.4" fill="none" stroke="#a4a4a4" stroke-width="0.75"/>
<rect x="252.3" y="407.2" width="4.4" height="4.4" fill="none" stroke="#a4a4a4" stroke-width="0.75"/>
<rect x="257.5" y="405.6" width="6.2" height="7.4" fill="none" stroke="#a4a4a4" stroke-width="0.75"/>
<rect x="264.3" y="407.2" width="4.4" height="4.4" fill="none" stroke="#a4a4a4" stroke-width="0.75"/>
<rect x="269.5" y="405.6" width="6.2" height="7.4" fill="none" stroke="#a4a4a4" stroke-width="0.75"/>
<rect x="276.3" y="407.2" width="4.4" height="4.4" fill="none" stroke="#a4a4a4" stroke-width="0.75"/>
<rect x="281.5" y="405.6" width="6.2" height="7.4" fill="none" stroke="#a4a4a4" stroke-width="0.75"/>
<rect x="288.3" y="407.2" width="4.4" height="4.4" fill="none" stroke="#a4a4a4" stroke-width="0.75"/>
<rect x="209.5" y="413.8" width="6.2" height="7.4" fill="none" stroke="#a4a4a4" stroke-width="0.75"/>
<rect x="216.3" y="415.4" width="4.4" height="4.4" fill="none" stroke="#a4a4a4" stroke-width="0.75"/>
<rect x="221.5" y="413.8" width="6.2" height="7.4" fill="none" stroke="#a4a4a4" stroke-width="0.75"/>
<rect x="228.3" y="415.4" width="4.4" height="4.4" fill="none" stroke="#a4a4a4" stroke-width="0.75"/>
<rect x="233.5" y="413.8" width="6.2" height="7.4" fill="none" stroke="#a4a4a4" stroke-width="0.75"/>
<rect x="240.3" y="415.4" width="4.4" height="4.4" fill="none" stroke="#a4a4a4" stroke-width="0.75"/>
<rect x="245.5" y="413.8" width="6.2" height="7.4" fill="none" stroke="#a4a4a4" stroke-width="0.75"/>
<rect x="252.3" y="415.4" width="4.4" height="4.4" fill="none" stroke="#a4a4a4" stroke-width="0.75"/>
<rect x="257.5" y="413.8" width="6.2" height="7.4" fill="none" stroke="#a4a4a4" stroke-width="0.75"/>
<rect x="264.3" y="415.4" width="4.4" height="4.4" fill="none" stroke="#a4a4a4" stroke-width="0.75"/>
<rect x="269.5" y="413.8" width="6.2" height="7.4" fill="none" stroke="#a4a4a4" stroke-width="0.75"/>
<rect x="276.3" y="415.4" width="4.4" height="4.4" fill="none" stroke="#a4a4a4" stroke-width="0.75"/>
<rect x="281.5" y="413.8" width="6.2" height="7.4" fill="none" stroke="#a4a4a4" stroke-width="0.75"/>
<rect x="288.3" y="415.4" width="4.4" height="4.4" fill="none" stroke="#a4a4a4" stroke-width="0.75"/>
<rect x="209.5" y="429.0" width="6.2" height="7.4" fill="none" stroke="#a4a4a4" stroke-width="0.75"/>
<rect x="216.3" y="430.6" width="4.4" height="4.4" fill="none" stroke="#a4a4a4" stroke-width="0.75"/>
<rect x="221.5" y="429.0" width="6.2" height="7.4" fill="none" stroke="#a4a4a4" stroke-width="0.75"/>
<rect x="228.3" y="430.6" width="4.4" height="4.4" fill="none" stroke="#a4a4a4" stroke-width="0.75"/>
<rect x="233.5" y="429.0" width="6.2" height="7.4" fill="none" stroke="#a4a4a4" stroke-width="0.75"/>
<rect x="240.3" y="430.6" width="4.4" height="4.4" fill="none" stroke="#a4a4a4" stroke-width="0.75"/>
<rect x="245.5" y="429.0" width="6.2" height="7.4" fill="none" stroke="#a4a4a4" stroke-width="0.75"/>
<rect x="252.3" y="430.6" width="4.4" height="4.4" fill="none" stroke="#a4a4a4" stroke-width="0.75"/>
<rect x="257.5" y="429.0" width="6.2" height="7.4" fill="none" stroke="#a4a4a4" stroke-width="0.75"/>
<rect x="264.3" y="430.6" width="4.4" height="4.4" fill="none" stroke="#a4a4a4" stroke-width="0.75"/>
<rect x="269.5" y="429.0" width="6.2" height="7.4" fill="none" stroke="#a4a4a4" stroke-width="0.75"/>
<rect x="276.3" y="430.6" width="4.4" height="4.4" fill="none" stroke="#a4a4a4" stroke-width="0.75"/>
<rect x="281.5" y="429.0" width="6.2" height="7.4" fill="none" stroke="#a4a4a4" stroke-width="0.75"/>
<rect x="288.3" y="430.6" width="4.4" height="4.4" fill="none" stroke="#a4a4a4" stroke-width="0.75"/>
<rect x="209.5" y="437.2" width="6.2" height="7.4" fill="none" stroke="#a4a4a4" stroke-width="0.75"/>
<rect x="216.3" y="438.8" width="4.4" height="4.4" fill="none" stroke="#a4a4a4" stroke-width="0.75"/>
<rect x="221.5" y="437.2" width="6.2" height="7.4" fill="none" stroke="#a4a4a4" stroke-width="0.75"/>
<rect x="228.3" y="438.8" width="4.4" height="4.4" fill="none" stroke="#a4a4a4" stroke-width="0.75"/>
<rect x="233.5" y="437.2" width="6.2" height="7.4" fill="none" stroke="#a4a4a4" stroke-width="0.75"/>
<rect x="240.3" y="438.8" width="4.4" height="4.4" fill="none" stroke="#a4a4a4" stroke-width="0.75"/>
<rect x="245.5" y="437.2" width="6.2" height="7.4" fill="none" stroke="#a4a4a4" stroke-width="0.75"/>
<rect x="252.3" y="438.8" width="4.4" height="4.4" fill="none" stroke="#a4a4a4" stroke-width="0.75"/>
<rect x="257.5" y="437.2" width="6.2" height="7.4" fill="none" stroke="#a4a4a4" stroke-width="0.75"/>
<rect x="264.3" y="438.8" width="4.4" height="4.4" fill="none" stroke="#a4a4a4" stroke-width="0.75"/>
<rect x="269.5" y="437.2" width="6.2" height="7.4" fill="none" stroke="#a4a4a4" stroke-width="0.75"/>
<rect x="276.3" y="438.8" width="4.4" height="4.4" fill="none" stroke="#a4a4a4" stroke-width="0.75"/>
<rect x="281.5" y="437.2" width="6.2" height="7.4" fill="none" stroke="#a4a4a4" stroke-width="0.75"/>
<rect x="288.3" y="438.8" width="4.4" height="4.4" fill="none" stroke="#a4a4a4" stroke-width="0.75"/>
<rect x="214.5" y="452.6" width="6.2" height="7.4" fill="none" stroke="#a4a4a4" stroke-width="0.75"/>
<rect x="221.3" y="454.2" width="4.4" height="4.4" fill="none" stroke="#a4a4a4" stroke-width="0.75"/>
<rect x="226.5" y="452.6" width="6.2" height="7.4" fill="none" stroke="#a4a4a4" stroke-width="0.75"/>
<rect x="233.3" y="454.2" width="4.4" height="4.4" fill="none" stroke="#a4a4a4" stroke-width="0.75"/>
<rect x="238.5" y="452.6" width="6.2" height="7.4" fill="none" stroke="#a4a4a4" stroke-width="0.75"/>
<rect x="245.3" y="454.2" width="4.4" height="4.4" fill="none" stroke="#a4a4a4" stroke-width="0.75"/>
<rect x="250.5" y="452.6" width="6.2" height="7.4" fill="none" stroke="#a4a4a4" stroke-width="0.75"/>
<rect x="257.3" y="454.2" width="4.4" height="4.4" fill="none" stroke="#a4a4a4" stroke-width="0.75"/>
<rect x="262.5" y="452.6" width="6.2" height="7.4" fill="none" stroke="#a4a4a4" stroke-width="0.75"/>
<rect x="269.3" y="454.2" width="4.4" height="4.4" fill="none" stroke="#a4a4a4" stroke-width="0.75"/>
<rect x="274.5" y="452.6" width="6.2" height="7.4" fill="none" stroke="#a4a4a4" stroke-width="0.75"/>
<rect x="281.3" y="454.2" width="4.4" height="4.4" fill="none" stroke="#a4a4a4" stroke-width="0.75"/>
<rect x="214.5" y="460.8" width="6.2" height="7.4" fill="none" stroke="#a4a4a4" stroke-width="0.75"/>
<rect x="221.3" y="462.4" width="4.4" height="4.4" fill="none" stroke="#a4a4a4" stroke-width="0.75"/>
<rect x="226.5" y="460.8" width="6.2" height="7.4" fill="none" stroke="#a4a4a4" stroke-width="0.75"/>
<rect x="233.3" y="462.4" width="4.4" height="4.4" fill="none" stroke="#a4a4a4" stroke-width="0.75"/>
<rect x="238.5" y="460.8" width="6.2" height="7.4" fill="none" stroke="#a4a4a4" stroke-width="0.75"/>
<rect x="245.3" y="462.4" width="4.4" height="4.4" fill="none" stroke="#a4a4a4" stroke-width="0.75"/>
<rect x="250.5" y="460.8" width="6.2" height="7.4" fill="none" stroke="#a4a4a4" stroke-width="0.75"/>
<rect x="257.3" y="462.4" width="4.4" height="4.4" fill="none" stroke="#a4a4a4" stroke-width="0.75"/>
<rect x="262.5" y="460.8" width="6.2" height="7.4" fill="none" stroke="#a4a4a4" stroke-width="0.75"/>
<rect x="269.3" y="462.4" width="4.4" height="4.4" fill="none" stroke="#a4a4a4" stroke-width="0.75"/>
<rect x="274.5" y="460.8" width="6.2" height="7.4" fill="none" stroke="#a4a4a4" stroke-width="0.75"/>
<rect x="281.3" y="462.4" width="4.4" height="4.4" fill="none" stroke="#a4a4a4" stroke-width="0.75"/>
<path d="M179.5 393.7H189L194 398V451L189 455.6H179.5" stroke="#8a8a8a" stroke-width="0.9" fill="none" />
<path d="M182 398L229 464M182 452L222 381" stroke="#8a8a8a" stroke-width="0.6" fill="none" stroke-dasharray="2 1"/>
<text x="246.0" y="469.0" font-size="6.5" fill="#e8e8e8" text-anchor="middle" font-weight="bold">普通教室</text>
<rect x="341.2" y="381.3" width="6.2" height="7.4" fill="none" stroke="#a4a4a4" stroke-width="0.75"/>
<rect x="348.0" y="382.9" width="4.4" height="4.4" fill="none" stroke="#a4a4a4" stroke-width="0.75"/>
<rect x="353.2" y="381.3" width="6.2" height="7.4" fill="none" stroke="#a4a4a4" stroke-width="0.75"/>
<rect x="360.0" y="382.9" width="4.4" height="4.4" fill="none" stroke="#a4a4a4" stroke-width="0.75"/>
<rect x="365.2" y="381.3" width="6.2" height="7.4" fill="none" stroke="#a4a4a4" stroke-width="0.75"/>
<rect x="372.0" y="382.9" width="4.4" height="4.4" fill="none" stroke="#a4a4a4" stroke-width="0.75"/>
<rect x="377.2" y="381.3" width="6.2" height="7.4" fill="none" stroke="#a4a4a4" stroke-width="0.75"/>
<rect x="384.0" y="382.9" width="4.4" height="4.4" fill="none" stroke="#a4a4a4" stroke-width="0.75"/>
<rect x="389.2" y="381.3" width="6.2" height="7.4" fill="none" stroke="#a4a4a4" stroke-width="0.75"/>
<rect x="396.0" y="382.9" width="4.4" height="4.4" fill="none" stroke="#a4a4a4" stroke-width="0.75"/>
<rect x="401.2" y="381.3" width="6.2" height="7.4" fill="none" stroke="#a4a4a4" stroke-width="0.75"/>
<rect x="408.0" y="382.9" width="4.4" height="4.4" fill="none" stroke="#a4a4a4" stroke-width="0.75"/>
<rect x="341.2" y="389.5" width="6.2" height="7.4" fill="none" stroke="#a4a4a4" stroke-width="0.75"/>
<rect x="348.0" y="391.1" width="4.4" height="4.4" fill="none" stroke="#a4a4a4" stroke-width="0.75"/>
<rect x="353.2" y="389.5" width="6.2" height="7.4" fill="none" stroke="#a4a4a4" stroke-width="0.75"/>
<rect x="360.0" y="391.1" width="4.4" height="4.4" fill="none" stroke="#a4a4a4" stroke-width="0.75"/>
<rect x="365.2" y="389.5" width="6.2" height="7.4" fill="none" stroke="#a4a4a4" stroke-width="0.75"/>
<rect x="372.0" y="391.1" width="4.4" height="4.4" fill="none" stroke="#a4a4a4" stroke-width="0.75"/>
<rect x="377.2" y="389.5" width="6.2" height="7.4" fill="none" stroke="#a4a4a4" stroke-width="0.75"/>
<rect x="384.0" y="391.1" width="4.4" height="4.4" fill="none" stroke="#a4a4a4" stroke-width="0.75"/>
<rect x="389.2" y="389.5" width="6.2" height="7.4" fill="none" stroke="#a4a4a4" stroke-width="0.75"/>
<rect x="396.0" y="391.1" width="4.4" height="4.4" fill="none" stroke="#a4a4a4" stroke-width="0.75"/>
<rect x="401.2" y="389.5" width="6.2" height="7.4" fill="none" stroke="#a4a4a4" stroke-width="0.75"/>
<rect x="408.0" y="391.1" width="4.4" height="4.4" fill="none" stroke="#a4a4a4" stroke-width="0.75"/>
<rect x="336.2" y="405.6" width="6.2" height="7.4" fill="none" stroke="#a4a4a4" stroke-width="0.75"/>
<rect x="343.0" y="407.2" width="4.4" height="4.4" fill="none" stroke="#a4a4a4" stroke-width="0.75"/>
<rect x="348.2" y="405.6" width="6.2" height="7.4" fill="none" stroke="#a4a4a4" stroke-width="0.75"/>
<rect x="355.0" y="407.2" width="4.4" height="4.4" fill="none" stroke="#a4a4a4" stroke-width="0.75"/>
<rect x="360.2" y="405.6" width="6.2" height="7.4" fill="none" stroke="#a4a4a4" stroke-width="0.75"/>
<rect x="367.0" y="407.2" width="4.4" height="4.4" fill="none" stroke="#a4a4a4" stroke-width="0.75"/>
<rect x="372.2" y="405.6" width="6.2" height="7.4" fill="none" stroke="#a4a4a4" stroke-width="0.75"/>
<rect x="379.0" y="407.2" width="4.4" height="4.4" fill="none" stroke="#a4a4a4" stroke-width="0.75"/>
<rect x="384.2" y="405.6" width="6.2" height="7.4" fill="none" stroke="#a4a4a4" stroke-width="0.75"/>
<rect x="391.0" y="407.2" width="4.4" height="4.4" fill="none" stroke="#a4a4a4" stroke-width="0.75"/>
<rect x="396.2" y="405.6" width="6.2" height="7.4" fill="none" stroke="#a4a4a4" stroke-width="0.75"/>
<rect x="403.0" y="407.2" width="4.4" height="4.4" fill="none" stroke="#a4a4a4" stroke-width="0.75"/>
<rect x="408.2" y="405.6" width="6.2" height="7.4" fill="none" stroke="#a4a4a4" stroke-width="0.75"/>
<rect x="415.0" y="407.2" width="4.4" height="4.4" fill="none" stroke="#a4a4a4" stroke-width="0.75"/>
<rect x="336.2" y="413.8" width="6.2" height="7.4" fill="none" stroke="#a4a4a4" stroke-width="0.75"/>
<rect x="343.0" y="415.4" width="4.4" height="4.4" fill="none" stroke="#a4a4a4" stroke-width="0.75"/>
<rect x="348.2" y="413.8" width="6.2" height="7.4" fill="none" stroke="#a4a4a4" stroke-width="0.75"/>
<rect x="355.0" y="415.4" width="4.4" height="4.4" fill="none" stroke="#a4a4a4" stroke-width="0.75"/>
<rect x="360.2" y="413.8" width="6.2" height="7.4" fill="none" stroke="#a4a4a4" stroke-width="0.75"/>
<rect x="367.0" y="415.4" width="4.4" height="4.4" fill="none" stroke="#a4a4a4" stroke-width="0.75"/>
<rect x="372.2" y="413.8" width="6.2" height="7.4" fill="none" stroke="#a4a4a4" stroke-width="0.75"/>
<rect x="379.0" y="415.4" width="4.4" height="4.4" fill="none" stroke="#a4a4a4" stroke-width="0.75"/>
<rect x="384.2" y="413.8" width="6.2" height="7.4" fill="none" stroke="#a4a4a4" stroke-width="0.75"/>
<rect x="391.0" y="415.4" width="4.4" height="4.4" fill="none" stroke="#a4a4a4" stroke-width="0.75"/>
<rect x="396.2" y="413.8" width="6.2" height="7.4" fill="none" stroke="#a4a4a4" stroke-width="0.75"/>
<rect x="403.0" y="415.4" width="4.4" height="4.4" fill="none" stroke="#a4a4a4" stroke-width="0.75"/>
<rect x="408.2" y="413.8" width="6.2" height="7.4" fill="none" stroke="#a4a4a4" stroke-width="0.75"/>
<rect x="415.0" y="415.4" width="4.4" height="4.4" fill="none" stroke="#a4a4a4" stroke-width="0.75"/>
<rect x="336.2" y="429.0" width="6.2" height="7.4" fill="none" stroke="#a4a4a4" stroke-width="0.75"/>
<rect x="343.0" y="430.6" width="4.4" height="4.4" fill="none" stroke="#a4a4a4" stroke-width="0.75"/>
<rect x="348.2" y="429.0" width="6.2" height="7.4" fill="none" stroke="#a4a4a4" stroke-width="0.75"/>
<rect x="355.0" y="430.6" width="4.4" height="4.4" fill="none" stroke="#a4a4a4" stroke-width="0.75"/>
<rect x="360.2" y="429.0" width="6.2" height="7.4" fill="none" stroke="#a4a4a4" stroke-width="0.75"/>
<rect x="367.0" y="430.6" width="4.4" height="4.4" fill="none" stroke="#a4a4a4" stroke-width="0.75"/>
<rect x="372.2" y="429.0" width="6.2" height="7.4" fill="none" stroke="#a4a4a4" stroke-width="0.75"/>
<rect x="379.0" y="430.6" width="4.4" height="4.4" fill="none" stroke="#a4a4a4" stroke-width="0.75"/>
<rect x="384.2" y="429.0" width="6.2" height="7.4" fill="none" stroke="#a4a4a4" stroke-width="0.75"/>
<rect x="391.0" y="430.6" width="4.4" height="4.4" fill="none" stroke="#a4a4a4" stroke-width="0.75"/>
<rect x="396.2" y="429.0" width="6.2" height="7.4" fill="none" stroke="#a4a4a4" stroke-width="0.75"/>
<rect x="403.0" y="430.6" width="4.4" height="4.4" fill="none" stroke="#a4a4a4" stroke-width="0.75"/>
<rect x="408.2" y="429.0" width="6.2" height="7.4" fill="none" stroke="#a4a4a4" stroke-width="0.75"/>
<rect x="415.0" y="430.6" width="4.4" height="4.4" fill="none" stroke="#a4a4a4" stroke-width="0.75"/>
<rect x="336.2" y="437.2" width="6.2" height="7.4" fill="none" stroke="#a4a4a4" stroke-width="0.75"/>
<rect x="343.0" y="438.8" width="4.4" height="4.4" fill="none" stroke="#a4a4a4" stroke-width="0.75"/>
<rect x="348.2" y="437.2" width="6.2" height="7.4" fill="none" stroke="#a4a4a4" stroke-width="0.75"/>
<rect x="355.0" y="438.8" width="4.4" height="4.4" fill="none" stroke="#a4a4a4" stroke-width="0.75"/>
<rect x="360.2" y="437.2" width="6.2" height="7.4" fill="none" stroke="#a4a4a4" stroke-width="0.75"/>
<rect x="367.0" y="438.8" width="4.4" height="4.4" fill="none" stroke="#a4a4a4" stroke-width="0.75"/>
<rect x="372.2" y="437.2" width="6.2" height="7.4" fill="none" stroke="#a4a4a4" stroke-width="0.75"/>
<rect x="379.0" y="438.8" width="4.4" height="4.4" fill="none" stroke="#a4a4a4" stroke-width="0.75"/>
<rect x="384.2" y="437.2" width="6.2" height="7.4" fill="none" stroke="#a4a4a4" stroke-width="0.75"/>
<rect x="391.0" y="438.8" width="4.4" height="4.4" fill="none" stroke="#a4a4a4" stroke-width="0.75"/>
<rect x="396.2" y="437.2" width="6.2" height="7.4" fill="none" stroke="#a4a4a4" stroke-width="0.75"/>
<rect x="403.0" y="438.8" width="4.4" height="4.4" fill="none" stroke="#a4a4a4" stroke-width="0.75"/>
<rect x="408.2" y="437.2" width="6.2" height="7.4" fill="none" stroke="#a4a4a4" stroke-width="0.75"/>
<rect x="415.0" y="438.8" width="4.4" height="4.4" fill="none" stroke="#a4a4a4" stroke-width="0.75"/>
<rect x="341.2" y="452.6" width="6.2" height="7.4" fill="none" stroke="#a4a4a4" stroke-width="0.75"/>
<rect x="348.0" y="454.2" width="4.4" height="4.4" fill="none" stroke="#a4a4a4" stroke-width="0.75"/>
<rect x="353.2" y="452.6" width="6.2" height="7.4" fill="none" stroke="#a4a4a4" stroke-width="0.75"/>
<rect x="360.0" y="454.2" width="4.4" height="4.4" fill="none" stroke="#a4a4a4" stroke-width="0.75"/>
<rect x="365.2" y="452.6" width="6.2" height="7.4" fill="none" stroke="#a4a4a4" stroke-width="0.75"/>
<rect x="372.0" y="454.2" width="4.4" height="4.4" fill="none" stroke="#a4a4a4" stroke-width="0.75"/>
<rect x="377.2" y="452.6" width="6.2" height="7.4" fill="none" stroke="#a4a4a4" stroke-width="0.75"/>
<rect x="384.0" y="454.2" width="4.4" height="4.4" fill="none" stroke="#a4a4a4" stroke-width="0.75"/>
<rect x="389.2" y="452.6" width="6.2" height="7.4" fill="none" stroke="#a4a4a4" stroke-width="0.75"/>
<rect x="396.0" y="454.2" width="4.4" height="4.4" fill="none" stroke="#a4a4a4" stroke-width="0.75"/>
<rect x="401.2" y="452.6" width="6.2" height="7.4" fill="none" stroke="#a4a4a4" stroke-width="0.75"/>
<rect x="408.0" y="454.2" width="4.4" height="4.4" fill="none" stroke="#a4a4a4" stroke-width="0.75"/>
<rect x="341.2" y="460.8" width="6.2" height="7.4" fill="none" stroke="#a4a4a4" stroke-width="0.75"/>
<rect x="348.0" y="462.4" width="4.4" height="4.4" fill="none" stroke="#a4a4a4" stroke-width="0.75"/>
<rect x="353.2" y="460.8" width="6.2" height="7.4" fill="none" stroke="#a4a4a4" stroke-width="0.75"/>
<rect x="360.0" y="462.4" width="4.4" height="4.4" fill="none" stroke="#a4a4a4" stroke-width="0.75"/>
<rect x="365.2" y="460.8" width="6.2" height="7.4" fill="none" stroke="#a4a4a4" stroke-width="0.75"/>
<rect x="372.0" y="462.4" width="4.4" height="4.4" fill="none" stroke="#a4a4a4" stroke-width="0.75"/>
<rect x="377.2" y="460.8" width="6.2" height="7.4" fill="none" stroke="#a4a4a4" stroke-width="0.75"/>
<rect x="384.0" y="462.4" width="4.4" height="4.4" fill="none" stroke="#a4a4a4" stroke-width="0.75"/>
<rect x="389.2" y="460.8" width="6.2" height="7.4" fill="none" stroke="#a4a4a4" stroke-width="0.75"/>
<rect x="396.0" y="462.4" width="4.4" height="4.4" fill="none" stroke="#a4a4a4" stroke-width="0.75"/>
<rect x="401.2" y="460.8" width="6.2" height="7.4" fill="none" stroke="#a4a4a4" stroke-width="0.75"/>
<rect x="408.0" y="462.4" width="4.4" height="4.4" fill="none" stroke="#a4a4a4" stroke-width="0.75"/>
<path d="M306.2 393.7H315.7L320.7 398V451L315.7 455.6H306.2" stroke="#8a8a8a" stroke-width="0.9" fill="none" />
<path d="M308.7 398L355.7 464M308.7 452L348.7 381" stroke="#8a8a8a" stroke-width="0.6" fill="none" stroke-dasharray="2 1"/>
<text x="372.7" y="469.0" font-size="6.5" fill="#e8e8e8" text-anchor="middle" font-weight="bold">普通教室</text>
<rect x="468.2" y="381.3" width="6.2" height="7.4" fill="none" stroke="#a4a4a4" stroke-width="0.75"/>
<rect x="475.0" y="382.9" width="4.4" height="4.4" fill="none" stroke="#a4a4a4" stroke-width="0.75"/>
<rect x="480.2" y="381.3" width="6.2" height="7.4" fill="none" stroke="#a4a4a4" stroke-width="0.75"/>
<rect x="487.0" y="382.9" width="4.4" height="4.4" fill="none" stroke="#a4a4a4" stroke-width="0.75"/>
<rect x="492.2" y="381.3" width="6.2" height="7.4" fill="none" stroke="#a4a4a4" stroke-width="0.75"/>
<rect x="499.0" y="382.9" width="4.4" height="4.4" fill="none" stroke="#a4a4a4" stroke-width="0.75"/>
<rect x="504.2" y="381.3" width="6.2" height="7.4" fill="none" stroke="#a4a4a4" stroke-width="0.75"/>
<rect x="511.0" y="382.9" width="4.4" height="4.4" fill="none" stroke="#a4a4a4" stroke-width="0.75"/>
<rect x="516.2" y="381.3" width="6.2" height="7.4" fill="none" stroke="#a4a4a4" stroke-width="0.75"/>
<rect x="523.0" y="382.9" width="4.4" height="4.4" fill="none" stroke="#a4a4a4" stroke-width="0.75"/>
<rect x="528.2" y="381.3" width="6.2" height="7.4" fill="none" stroke="#a4a4a4" stroke-width="0.75"/>
<rect x="535.0" y="382.9" width="4.4" height="4.4" fill="none" stroke="#a4a4a4" stroke-width="0.75"/>
<rect x="468.2" y="389.5" width="6.2" height="7.4" fill="none" stroke="#a4a4a4" stroke-width="0.75"/>
<rect x="475.0" y="391.1" width="4.4" height="4.4" fill="none" stroke="#a4a4a4" stroke-width="0.75"/>
<rect x="480.2" y="389.5" width="6.2" height="7.4" fill="none" stroke="#a4a4a4" stroke-width="0.75"/>
<rect x="487.0" y="391.1" width="4.4" height="4.4" fill="none" stroke="#a4a4a4" stroke-width="0.75"/>
<rect x="492.2" y="389.5" width="6.2" height="7.4" fill="none" stroke="#a4a4a4" stroke-width="0.75"/>
<rect x="499.0" y="391.1" width="4.4" height="4.4" fill="none" stroke="#a4a4a4" stroke-width="0.75"/>
<rect x="504.2" y="389.5" width="6.2" height="7.4" fill="none" stroke="#a4a4a4" stroke-width="0.75"/>
<rect x="511.0" y="391.1" width="4.4" height="4.4" fill="none" stroke="#a4a4a4" stroke-width="0.75"/>
<rect x="516.2" y="389.5" width="6.2" height="7.4" fill="none" stroke="#a4a4a4" stroke-width="0.75"/>
<rect x="523.0" y="391.1" width="4.4" height="4.4" fill="none" stroke="#a4a4a4" stroke-width="0.75"/>
<rect x="528.2" y="389.5" width="6.2" height="7.4" fill="none" stroke="#a4a4a4" stroke-width="0.75"/>
<rect x="535.0" y="391.1" width="4.4" height="4.4" fill="none" stroke="#a4a4a4" stroke-width="0.75"/>
<rect x="463.2" y="405.6" width="6.2" height="7.4" fill="none" stroke="#a4a4a4" stroke-width="0.75"/>
<rect x="470.0" y="407.2" width="4.4" height="4.4" fill="none" stroke="#a4a4a4" stroke-width="0.75"/>
<rect x="475.2" y="405.6" width="6.2" height="7.4" fill="none" stroke="#a4a4a4" stroke-width="0.75"/>
<rect x="482.0" y="407.2" width="4.4" height="4.4" fill="none" stroke="#a4a4a4" stroke-width="0.75"/>
<rect x="487.2" y="405.6" width="6.2" height="7.4" fill="none" stroke="#a4a4a4" stroke-width="0.75"/>
<rect x="494.0" y="407.2" width="4.4" height="4.4" fill="none" stroke="#a4a4a4" stroke-width="0.75"/>
<rect x="499.2" y="405.6" width="6.2" height="7.4" fill="none" stroke="#a4a4a4" stroke-width="0.75"/>
<rect x="506.0" y="407.2" width="4.4" height="4.4" fill="none" stroke="#a4a4a4" stroke-width="0.75"/>
<rect x="511.2" y="405.6" width="6.2" height="7.4" fill="none" stroke="#a4a4a4" stroke-width="0.75"/>
<rect x="518.0" y="407.2" width="4.4" height="4.4" fill="none" stroke="#a4a4a4" stroke-width="0.75"/>
<rect x="523.2" y="405.6" width="6.2" height="7.4" fill="none" stroke="#a4a4a4" stroke-width="0.75"/>
<rect x="530.0" y="407.2" width="4.4" height="4.4" fill="none" stroke="#a4a4a4" stroke-width="0.75"/>
<rect x="535.2" y="405.6" width="6.2" height="7.4" fill="none" stroke="#a4a4a4" stroke-width="0.75"/>
<rect x="542.0" y="407.2" width="4.4" height="4.4" fill="none" stroke="#a4a4a4" stroke-width="0.75"/>
<rect x="463.2" y="413.8" width="6.2" height="7.4" fill="none" stroke="#a4a4a4" stroke-width="0.75"/>
<rect x="470.0" y="415.4" width="4.4" height="4.4" fill="none" stroke="#a4a4a4" stroke-width="0.75"/>
<rect x="475.2" y="413.8" width="6.2" height="7.4" fill="none" stroke="#a4a4a4" stroke-width="0.75"/>
<rect x="482.0" y="415.4" width="4.4" height="4.4" fill="none" stroke="#a4a4a4" stroke-width="0.75"/>
<rect x="487.2" y="413.8" width="6.2" height="7.4" fill="none" stroke="#a4a4a4" stroke-width="0.75"/>
<rect x="494.0" y="415.4" width="4.4" height="4.4" fill="none" stroke="#a4a4a4" stroke-width="0.75"/>
<rect x="499.2" y="413.8" width="6.2" height="7.4" fill="none" stroke="#a4a4a4" stroke-width="0.75"/>
<rect x="506.0" y="415.4" width="4.4" height="4.4" fill="none" stroke="#a4a4a4" stroke-width="0.75"/>
<rect x="511.2" y="413.8" width="6.2" height="7.4" fill="none" stroke="#a4a4a4" stroke-width="0.75"/>
<rect x="518.0" y="415.4" width="4.4" height="4.4" fill="none" stroke="#a4a4a4" stroke-width="0.75"/>
<rect x="523.2" y="413.8" width="6.2" height="7.4" fill="none" stroke="#a4a4a4" stroke-width="0.75"/>
<rect x="530.0" y="415.4" width="4.4" height="4.4" fill="none" stroke="#a4a4a4" stroke-width="0.75"/>
<rect x="535.2" y="413.8" width="6.2" height="7.4" fill="none" stroke="#a4a4a4" stroke-width="0.75"/>
<rect x="542.0" y="415.4" width="4.4" height="4.4" fill="none" stroke="#a4a4a4" stroke-width="0.75"/>
<rect x="463.2" y="429.0" width="6.2" height="7.4" fill="none" stroke="#a4a4a4" stroke-width="0.75"/>
<rect x="470.0" y="430.6" width="4.4" height="4.4" fill="none" stroke="#a4a4a4" stroke-width="0.75"/>
<rect x="475.2" y="429.0" width="6.2" height="7.4" fill="none" stroke="#a4a4a4" stroke-width="0.75"/>
<rect x="482.0" y="430.6" width="4.4" height="4.4" fill="none" stroke="#a4a4a4" stroke-width="0.75"/>
<rect x="487.2" y="429.0" width="6.2" height="7.4" fill="none" stroke="#a4a4a4" stroke-width="0.75"/>
<rect x="494.0" y="430.6" width="4.4" height="4.4" fill="none" stroke="#a4a4a4" stroke-width="0.75"/>
<rect x="499.2" y="429.0" width="6.2" height="7.4" fill="none" stroke="#a4a4a4" stroke-width="0.75"/>
<rect x="506.0" y="430.6" width="4.4" height="4.4" fill="none" stroke="#a4a4a4" stroke-width="0.75"/>
<rect x="511.2" y="429.0" width="6.2" height="7.4" fill="none" stroke="#a4a4a4" stroke-width="0.75"/>
<rect x="518.0" y="430.6" width="4.4" height="4.4" fill="none" stroke="#a4a4a4" stroke-width="0.75"/>
<rect x="523.2" y="429.0" width="6.2" height="7.4" fill="none" stroke="#a4a4a4" stroke-width="0.75"/>
<rect x="530.0" y="430.6" width="4.4" height="4.4" fill="none" stroke="#a4a4a4" stroke-width="0.75"/>
<rect x="535.2" y="429.0" width="6.2" height="7.4" fill="none" stroke="#a4a4a4" stroke-width="0.75"/>
<rect x="542.0" y="430.6" width="4.4" height="4.4" fill="none" stroke="#a4a4a4" stroke-width="0.75"/>
<rect x="463.2" y="437.2" width="6.2" height="7.4" fill="none" stroke="#a4a4a4" stroke-width="0.75"/>
<rect x="470.0" y="438.8" width="4.4" height="4.4" fill="none" stroke="#a4a4a4" stroke-width="0.75"/>
<rect x="475.2" y="437.2" width="6.2" height="7.4" fill="none" stroke="#a4a4a4" stroke-width="0.75"/>
<rect x="482.0" y="438.8" width="4.4" height="4.4" fill="none" stroke="#a4a4a4" stroke-width="0.75"/>
<rect x="487.2" y="437.2" width="6.2" height="7.4" fill="none" stroke="#a4a4a4" stroke-width="0.75"/>
<rect x="494.0" y="438.8" width="4.4" height="4.4" fill="none" stroke="#a4a4a4" stroke-width="0.75"/>
<rect x="499.2" y="437.2" width="6.2" height="7.4" fill="none" stroke="#a4a4a4" stroke-width="0.75"/>
<rect x="506.0" y="438.8" width="4.4" height="4.4" fill="none" stroke="#a4a4a4" stroke-width="0.75"/>
<rect x="511.2" y="437.2" width="6.2" height="7.4" fill="none" stroke="#a4a4a4" stroke-width="0.75"/>
<rect x="518.0" y="438.8" width="4.4" height="4.4" fill="none" stroke="#a4a4a4" stroke-width="0.75"/>
<rect x="523.2" y="437.2" width="6.2" height="7.4" fill="none" stroke="#a4a4a4" stroke-width="0.75"/>
<rect x="530.0" y="438.8" width="4.4" height="4.4" fill="none" stroke="#a4a4a4" stroke-width="0.75"/>
<rect x="535.2" y="437.2" width="6.2" height="7.4" fill="none" stroke="#a4a4a4" stroke-width="0.75"/>
<rect x="542.0" y="438.8" width="4.4" height="4.4" fill="none" stroke="#a4a4a4" stroke-width="0.75"/>
<rect x="468.2" y="452.6" width="6.2" height="7.4" fill="none" stroke="#a4a4a4" stroke-width="0.75"/>
<rect x="475.0" y="454.2" width="4.4" height="4.4" fill="none" stroke="#a4a4a4" stroke-width="0.75"/>
<rect x="480.2" y="452.6" width="6.2" height="7.4" fill="none" stroke="#a4a4a4" stroke-width="0.75"/>
<rect x="487.0" y="454.2" width="4.4" height="4.4" fill="none" stroke="#a4a4a4" stroke-width="0.75"/>
<rect x="492.2" y="452.6" width="6.2" height="7.4" fill="none" stroke="#a4a4a4" stroke-width="0.75"/>
<rect x="499.0" y="454.2" width="4.4" height="4.4" fill="none" stroke="#a4a4a4" stroke-width="0.75"/>
<rect x="504.2" y="452.6" width="6.2" height="7.4" fill="none" stroke="#a4a4a4" stroke-width="0.75"/>
<rect x="511.0" y="454.2" width="4.4" height="4.4" fill="none" stroke="#a4a4a4" stroke-width="0.75"/>
<rect x="516.2" y="452.6" width="6.2" height="7.4" fill="none" stroke="#a4a4a4" stroke-width="0.75"/>
<rect x="523.0" y="454.2" width="4.4" height="4.4" fill="none" stroke="#a4a4a4" stroke-width="0.75"/>
<rect x="528.2" y="452.6" width="6.2" height="7.4" fill="none" stroke="#a4a4a4" stroke-width="0.75"/>
<rect x="535.0" y="454.2" width="4.4" height="4.4" fill="none" stroke="#a4a4a4" stroke-width="0.75"/>
<rect x="468.2" y="460.8" width="6.2" height="7.4" fill="none" stroke="#a4a4a4" stroke-width="0.75"/>
<rect x="475.0" y="462.4" width="4.4" height="4.4" fill="none" stroke="#a4a4a4" stroke-width="0.75"/>
<rect x="480.2" y="460.8" width="6.2" height="7.4" fill="none" stroke="#a4a4a4" stroke-width="0.75"/>
<rect x="487.0" y="462.4" width="4.4" height="4.4" fill="none" stroke="#a4a4a4" stroke-width="0.75"/>
<rect x="492.2" y="460.8" width="6.2" height="7.4" fill="none" stroke="#a4a4a4" stroke-width="0.75"/>
<rect x="499.0" y="462.4" width="4.4" height="4.4" fill="none" stroke="#a4a4a4" stroke-width="0.75"/>
<rect x="504.2" y="460.8" width="6.2" height="7.4" fill="none" stroke="#a4a4a4" stroke-width="0.75"/>
<rect x="511.0" y="462.4" width="4.4" height="4.4" fill="none" stroke="#a4a4a4" stroke-width="0.75"/>
<rect x="516.2" y="460.8" width="6.2" height="7.4" fill="none" stroke="#a4a4a4" stroke-width="0.75"/>
<rect x="523.0" y="462.4" width="4.4" height="4.4" fill="none" stroke="#a4a4a4" stroke-width="0.75"/>
<rect x="528.2" y="460.8" width="6.2" height="7.4" fill="none" stroke="#a4a4a4" stroke-width="0.75"/>
<rect x="535.0" y="462.4" width="4.4" height="4.4" fill="none" stroke="#a4a4a4" stroke-width="0.75"/>
<path d="M433.2 393.7H442.7L447.7 398V451L442.7 455.6H433.2" stroke="#8a8a8a" stroke-width="0.9" fill="none" />
<path d="M435.7 398L482.7 464M435.7 452L475.7 381" stroke="#8a8a8a" stroke-width="0.6" fill="none" stroke-dasharray="2 1"/>
<text x="499.7" y="469.0" font-size="6.5" fill="#e8e8e8" text-anchor="middle" font-weight="bold">普通教室</text>
<rect x="723.2" y="381.3" width="6.2" height="7.4" fill="none" stroke="#a4a4a4" stroke-width="0.75"/>
<rect x="730.0" y="382.9" width="4.4" height="4.4" fill="none" stroke="#a4a4a4" stroke-width="0.75"/>
<rect x="735.2" y="381.3" width="6.2" height="7.4" fill="none" stroke="#a4a4a4" stroke-width="0.75"/>
<rect x="742.0" y="382.9" width="4.4" height="4.4" fill="none" stroke="#a4a4a4" stroke-width="0.75"/>
<rect x="747.2" y="381.3" width="6.2" height="7.4" fill="none" stroke="#a4a4a4" stroke-width="0.75"/>
<rect x="754.0" y="382.9" width="4.4" height="4.4" fill="none" stroke="#a4a4a4" stroke-width="0.75"/>
<rect x="759.2" y="381.3" width="6.2" height="7.4" fill="none" stroke="#a4a4a4" stroke-width="0.75"/>
<rect x="766.0" y="382.9" width="4.4" height="4.4" fill="none" stroke="#a4a4a4" stroke-width="0.75"/>
<rect x="771.2" y="381.3" width="6.2" height="7.4" fill="none" stroke="#a4a4a4" stroke-width="0.75"/>
<rect x="778.0" y="382.9" width="4.4" height="4.4" fill="none" stroke="#a4a4a4" stroke-width="0.75"/>
<rect x="783.2" y="381.3" width="6.2" height="7.4" fill="none" stroke="#a4a4a4" stroke-width="0.75"/>
<rect x="790.0" y="382.9" width="4.4" height="4.4" fill="none" stroke="#a4a4a4" stroke-width="0.75"/>
<rect x="723.2" y="389.5" width="6.2" height="7.4" fill="none" stroke="#a4a4a4" stroke-width="0.75"/>
<rect x="730.0" y="391.1" width="4.4" height="4.4" fill="none" stroke="#a4a4a4" stroke-width="0.75"/>
<rect x="735.2" y="389.5" width="6.2" height="7.4" fill="none" stroke="#a4a4a4" stroke-width="0.75"/>
<rect x="742.0" y="391.1" width="4.4" height="4.4" fill="none" stroke="#a4a4a4" stroke-width="0.75"/>
<rect x="747.2" y="389.5" width="6.2" height="7.4" fill="none" stroke="#a4a4a4" stroke-width="0.75"/>
<rect x="754.0" y="391.1" width="4.4" height="4.4" fill="none" stroke="#a4a4a4" stroke-width="0.75"/>
<rect x="759.2" y="389.5" width="6.2" height="7.4" fill="none" stroke="#a4a4a4" stroke-width="0.75"/>
<rect x="766.0" y="391.1" width="4.4" height="4.4" fill="none" stroke="#a4a4a4" stroke-width="0.75"/>
<rect x="771.2" y="389.5" width="6.2" height="7.4" fill="none" stroke="#a4a4a4" stroke-width="0.75"/>
<rect x="778.0" y="391.1" width="4.4" height="4.4" fill="none" stroke="#a4a4a4" stroke-width="0.75"/>
<rect x="783.2" y="389.5" width="6.2" height="7.4" fill="none" stroke="#a4a4a4" stroke-width="0.75"/>
<rect x="790.0" y="391.1" width="4.4" height="4.4" fill="none" stroke="#a4a4a4" stroke-width="0.75"/>
<rect x="718.2" y="405.6" width="6.2" height="7.4" fill="none" stroke="#a4a4a4" stroke-width="0.75"/>
<rect x="725.0" y="407.2" width="4.4" height="4.4" fill="none" stroke="#a4a4a4" stroke-width="0.75"/>
<rect x="730.2" y="405.6" width="6.2" height="7.4" fill="none" stroke="#a4a4a4" stroke-width="0.75"/>
<rect x="737.0" y="407.2" width="4.4" height="4.4" fill="none" stroke="#a4a4a4" stroke-width="0.75"/>
<rect x="742.2" y="405.6" width="6.2" height="7.4" fill="none" stroke="#a4a4a4" stroke-width="0.75"/>
<rect x="749.0" y="407.2" width="4.4" height="4.4" fill="none" stroke="#a4a4a4" stroke-width="0.75"/>
<rect x="754.2" y="405.6" width="6.2" height="7.4" fill="none" stroke="#a4a4a4" stroke-width="0.75"/>
<rect x="761.0" y="407.2" width="4.4" height="4.4" fill="none" stroke="#a4a4a4" stroke-width="0.75"/>
<rect x="766.2" y="405.6" width="6.2" height="7.4" fill="none" stroke="#a4a4a4" stroke-width="0.75"/>
<rect x="773.0" y="407.2" width="4.4" height="4.4" fill="none" stroke="#a4a4a4" stroke-width="0.75"/>
<rect x="778.2" y="405.6" width="6.2" height="7.4" fill="none" stroke="#a4a4a4" stroke-width="0.75"/>
<rect x="785.0" y="407.2" width="4.4" height="4.4" fill="none" stroke="#a4a4a4" stroke-width="0.75"/>
<rect x="790.2" y="405.6" width="6.2" height="7.4" fill="none" stroke="#a4a4a4" stroke-width="0.75"/>
<rect x="797.0" y="407.2" width="4.4" height="4.4" fill="none" stroke="#a4a4a4" stroke-width="0.75"/>
<rect x="718.2" y="413.8" width="6.2" height="7.4" fill="none" stroke="#a4a4a4" stroke-width="0.75"/>
<rect x="725.0" y="415.4" width="4.4" height="4.4" fill="none" stroke="#a4a4a4" stroke-width="0.75"/>
<rect x="730.2" y="413.8" width="6.2" height="7.4" fill="none" stroke="#a4a4a4" stroke-width="0.75"/>
<rect x="737.0" y="415.4" width="4.4" height="4.4" fill="none" stroke="#a4a4a4" stroke-width="0.75"/>
<rect x="742.2" y="413.8" width="6.2" height="7.4" fill="none" stroke="#a4a4a4" stroke-width="0.75"/>
<rect x="749.0" y="415.4" width="4.4" height="4.4" fill="none" stroke="#a4a4a4" stroke-width="0.75"/>
<rect x="754.2" y="413.8" width="6.2" height="7.4" fill="none" stroke="#a4a4a4" stroke-width="0.75"/>
<rect x="761.0" y="415.4" width="4.4" height="4.4" fill="none" stroke="#a4a4a4" stroke-width="0.75"/>
<rect x="766.2" y="413.8" width="6.2" height="7.4" fill="none" stroke="#a4a4a4" stroke-width="0.75"/>
<rect x="773.0" y="415.4" width="4.4" height="4.4" fill="none" stroke="#a4a4a4" stroke-width="0.75"/>
<rect x="778.2" y="413.8" width="6.2" height="7.4" fill="none" stroke="#a4a4a4" stroke-width="0.75"/>
<rect x="785.0" y="415.4" width="4.4" height="4.4" fill="none" stroke="#a4a4a4" stroke-width="0.75"/>
<rect x="790.2" y="413.8" width="6.2" height="7.4" fill="none" stroke="#a4a4a4" stroke-width="0.75"/>
<rect x="797.0" y="415.4" width="4.4" height="4.4" fill="none" stroke="#a4a4a4" stroke-width="0.75"/>
<rect x="718.2" y="429.0" width="6.2" height="7.4" fill="none" stroke="#a4a4a4" stroke-width="0.75"/>
<rect x="725.0" y="430.6" width="4.4" height="4.4" fill="none" stroke="#a4a4a4" stroke-width="0.75"/>
<rect x="730.2" y="429.0" width="6.2" height="7.4" fill="none" stroke="#a4a4a4" stroke-width="0.75"/>
<rect x="737.0" y="430.6" width="4.4" height="4.4" fill="none" stroke="#a4a4a4" stroke-width="0.75"/>
<rect x="742.2" y="429.0" width="6.2" height="7.4" fill="none" stroke="#a4a4a4" stroke-width="0.75"/>
<rect x="749.0" y="430.6" width="4.4" height="4.4" fill="none" stroke="#a4a4a4" stroke-width="0.75"/>
<rect x="754.2" y="429.0" width="6.2" height="7.4" fill="none" stroke="#a4a4a4" stroke-width="0.75"/>
<rect x="761.0" y="430.6" width="4.4" height="4.4" fill="none" stroke="#a4a4a4" stroke-width="0.75"/>
<rect x="766.2" y="429.0" width="6.2" height="7.4" fill="none" stroke="#a4a4a4" stroke-width="0.75"/>
<rect x="773.0" y="430.6" width="4.4" height="4.4" fill="none" stroke="#a4a4a4" stroke-width="0.75"/>
<rect x="778.2" y="429.0" width="6.2" height="7.4" fill="none" stroke="#a4a4a4" stroke-width="0.75"/>
<rect x="785.0" y="430.6" width="4.4" height="4.4" fill="none" stroke="#a4a4a4" stroke-width="0.75"/>
<rect x="790.2" y="429.0" width="6.2" height="7.4" fill="none" stroke="#a4a4a4" stroke-width="0.75"/>
<rect x="797.0" y="430.6" width="4.4" height="4.4" fill="none" stroke="#a4a4a4" stroke-width="0.75"/>
<rect x="718.2" y="437.2" width="6.2" height="7.4" fill="none" stroke="#a4a4a4" stroke-width="0.75"/>
<rect x="725.0" y="438.8" width="4.4" height="4.4" fill="none" stroke="#a4a4a4" stroke-width="0.75"/>
<rect x="730.2" y="437.2" width="6.2" height="7.4" fill="none" stroke="#a4a4a4" stroke-width="0.75"/>
<rect x="737.0" y="438.8" width="4.4" height="4.4" fill="none" stroke="#a4a4a4" stroke-width="0.75"/>
<rect x="742.2" y="437.2" width="6.2" height="7.4" fill="none" stroke="#a4a4a4" stroke-width="0.75"/>
<rect x="749.0" y="438.8" width="4.4" height="4.4" fill="none" stroke="#a4a4a4" stroke-width="0.75"/>
<rect x="754.2" y="437.2" width="6.2" height="7.4" fill="none" stroke="#a4a4a4" stroke-width="0.75"/>
<rect x="761.0" y="438.8" width="4.4" height="4.4" fill="none" stroke="#a4a4a4" stroke-width="0.75"/>
<rect x="766.2" y="437.2" width="6.2" height="7.4" fill="none" stroke="#a4a4a4" stroke-width="0.75"/>
<rect x="773.0" y="438.8" width="4.4" height="4.4" fill="none" stroke="#a4a4a4" stroke-width="0.75"/>
<rect x="778.2" y="437.2" width="6.2" height="7.4" fill="none" stroke="#a4a4a4" stroke-width="0.75"/>
<rect x="785.0" y="438.8" width="4.4" height="4.4" fill="none" stroke="#a4a4a4" stroke-width="0.75"/>
<rect x="790.2" y="437.2" width="6.2" height="7.4" fill="none" stroke="#a4a4a4" stroke-width="0.75"/>
<rect x="797.0" y="438.8" width="4.4" height="4.4" fill="none" stroke="#a4a4a4" stroke-width="0.75"/>
<rect x="723.2" y="452.6" width="6.2" height="7.4" fill="none" stroke="#a4a4a4" stroke-width="0.75"/>
<rect x="730.0" y="454.2" width="4.4" height="4.4" fill="none" stroke="#a4a4a4" stroke-width="0.75"/>
<rect x="735.2" y="452.6" width="6.2" height="7.4" fill="none" stroke="#a4a4a4" stroke-width="0.75"/>
<rect x="742.0" y="454.2" width="4.4" height="4.4" fill="none" stroke="#a4a4a4" stroke-width="0.75"/>
<rect x="747.2" y="452.6" width="6.2" height="7.4" fill="none" stroke="#a4a4a4" stroke-width="0.75"/>
<rect x="754.0" y="454.2" width="4.4" height="4.4" fill="none" stroke="#a4a4a4" stroke-width="0.75"/>
<rect x="759.2" y="452.6" width="6.2" height="7.4" fill="none" stroke="#a4a4a4" stroke-width="0.75"/>
<rect x="766.0" y="454.2" width="4.4" height="4.4" fill="none" stroke="#a4a4a4" stroke-width="0.75"/>
<rect x="771.2" y="452.6" width="6.2" height="7.4" fill="none" stroke="#a4a4a4" stroke-width="0.75"/>
<rect x="778.0" y="454.2" width="4.4" height="4.4" fill="none" stroke="#a4a4a4" stroke-width="0.75"/>
<rect x="783.2" y="452.6" width="6.2" height="7.4" fill="none" stroke="#a4a4a4" stroke-width="0.75"/>
<rect x="790.0" y="454.2" width="4.4" height="4.4" fill="none" stroke="#a4a4a4" stroke-width="0.75"/>
<rect x="723.2" y="460.8" width="6.2" height="7.4" fill="none" stroke="#a4a4a4" stroke-width="0.75"/>
<rect x="730.0" y="462.4" width="4.4" height="4.4" fill="none" stroke="#a4a4a4" stroke-width="0.75"/>
<rect x="735.2" y="460.8" width="6.2" height="7.4" fill="none" stroke="#a4a4a4" stroke-width="0.75"/>
<rect x="742.0" y="462.4" width="4.4" height="4.4" fill="none" stroke="#a4a4a4" stroke-width="0.75"/>
<rect x="747.2" y="460.8" width="6.2" height="7.4" fill="none" stroke="#a4a4a4" stroke-width="0.75"/>
<rect x="754.0" y="462.4" width="4.4" height="4.4" fill="none" stroke="#a4a4a4" stroke-width="0.75"/>
<rect x="759.2" y="460.8" width="6.2" height="7.4" fill="none" stroke="#a4a4a4" stroke-width="0.75"/>
<rect x="766.0" y="462.4" width="4.4" height="4.4" fill="none" stroke="#a4a4a4" stroke-width="0.75"/>
<rect x="771.2" y="460.8" width="6.2" height="7.4" fill="none" stroke="#a4a4a4" stroke-width="0.75"/>
<rect x="778.0" y="462.4" width="4.4" height="4.4" fill="none" stroke="#a4a4a4" stroke-width="0.75"/>
<rect x="783.2" y="460.8" width="6.2" height="7.4" fill="none" stroke="#a4a4a4" stroke-width="0.75"/>
<rect x="790.0" y="462.4" width="4.4" height="4.4" fill="none" stroke="#a4a4a4" stroke-width="0.75"/>
<path d="M688.2 393.7H697.7L702.7 398V451L697.7 455.6H688.2" stroke="#8a8a8a" stroke-width="0.9" fill="none" />
<path d="M690.7 398L737.7 464M690.7 452L730.7 381" stroke="#8a8a8a" stroke-width="0.6" fill="none" stroke-dasharray="2 1"/>
<text x="754.7" y="469.0" font-size="6.5" fill="#e8e8e8" text-anchor="middle" font-weight="bold">普通教室</text>
<rect x="851.2" y="381.3" width="6.2" height="7.4" fill="none" stroke="#a4a4a4" stroke-width="0.75"/>
<rect x="858.0" y="382.9" width="4.4" height="4.4" fill="none" stroke="#a4a4a4" stroke-width="0.75"/>
<rect x="863.2" y="381.3" width="6.2" height="7.4" fill="none" stroke="#a4a4a4" stroke-width="0.75"/>
<rect x="870.0" y="382.9" width="4.4" height="4.4" fill="none" stroke="#a4a4a4" stroke-width="0.75"/>
<rect x="875.2" y="381.3" width="6.2" height="7.4" fill="none" stroke="#a4a4a4" stroke-width="0.75"/>
<rect x="882.0" y="382.9" width="4.4" height="4.4" fill="none" stroke="#a4a4a4" stroke-width="0.75"/>
<rect x="887.2" y="381.3" width="6.2" height="7.4" fill="none" stroke="#a4a4a4" stroke-width="0.75"/>
<rect x="894.0" y="382.9" width="4.4" height="4.4" fill="none" stroke="#a4a4a4" stroke-width="0.75"/>
<rect x="899.2" y="381.3" width="6.2" height="7.4" fill="none" stroke="#a4a4a4" stroke-width="0.75"/>
<rect x="906.0" y="382.9" width="4.4" height="4.4" fill="none" stroke="#a4a4a4" stroke-width="0.75"/>
<rect x="911.2" y="381.3" width="6.2" height="7.4" fill="none" stroke="#a4a4a4" stroke-width="0.75"/>
<rect x="918.0" y="382.9" width="4.4" height="4.4" fill="none" stroke="#a4a4a4" stroke-width="0.75"/>
<rect x="851.2" y="389.5" width="6.2" height="7.4" fill="none" stroke="#a4a4a4" stroke-width="0.75"/>
<rect x="858.0" y="391.1" width="4.4" height="4.4" fill="none" stroke="#a4a4a4" stroke-width="0.75"/>
<rect x="863.2" y="389.5" width="6.2" height="7.4" fill="none" stroke="#a4a4a4" stroke-width="0.75"/>
<rect x="870.0" y="391.1" width="4.4" height="4.4" fill="none" stroke="#a4a4a4" stroke-width="0.75"/>
<rect x="875.2" y="389.5" width="6.2" height="7.4" fill="none" stroke="#a4a4a4" stroke-width="0.75"/>
<rect x="882.0" y="391.1" width="4.4" height="4.4" fill="none" stroke="#a4a4a4" stroke-width="0.75"/>
<rect x="887.2" y="389.5" width="6.2" height="7.4" fill="none" stroke="#a4a4a4" stroke-width="0.75"/>
<rect x="894.0" y="391.1" width="4.4" height="4.4" fill="none" stroke="#a4a4a4" stroke-width="0.75"/>
<rect x="899.2" y="389.5" width="6.2" height="7.4" fill="none" stroke="#a4a4a4" stroke-width="0.75"/>
<rect x="906.0" y="391.1" width="4.4" height="4.4" fill="none" stroke="#a4a4a4" stroke-width="0.75"/>
<rect x="911.2" y="389.5" width="6.2" height="7.4" fill="none" stroke="#a4a4a4" stroke-width="0.75"/>
<rect x="918.0" y="391.1" width="4.4" height="4.4" fill="none" stroke="#a4a4a4" stroke-width="0.75"/>
<rect x="846.2" y="405.6" width="6.2" height="7.4" fill="none" stroke="#a4a4a4" stroke-width="0.75"/>
<rect x="853.0" y="407.2" width="4.4" height="4.4" fill="none" stroke="#a4a4a4" stroke-width="0.75"/>
<rect x="858.2" y="405.6" width="6.2" height="7.4" fill="none" stroke="#a4a4a4" stroke-width="0.75"/>
<rect x="865.0" y="407.2" width="4.4" height="4.4" fill="none" stroke="#a4a4a4" stroke-width="0.75"/>
<rect x="870.2" y="405.6" width="6.2" height="7.4" fill="none" stroke="#a4a4a4" stroke-width="0.75"/>
<rect x="877.0" y="407.2" width="4.4" height="4.4" fill="none" stroke="#a4a4a4" stroke-width="0.75"/>
<rect x="882.2" y="405.6" width="6.2" height="7.4" fill="none" stroke="#a4a4a4" stroke-width="0.75"/>
<rect x="889.0" y="407.2" width="4.4" height="4.4" fill="none" stroke="#a4a4a4" stroke-width="0.75"/>
<rect x="894.2" y="405.6" width="6.2" height="7.4" fill="none" stroke="#a4a4a4" stroke-width="0.75"/>
<rect x="901.0" y="407.2" width="4.4" height="4.4" fill="none" stroke="#a4a4a4" stroke-width="0.75"/>
<rect x="906.2" y="405.6" width="6.2" height="7.4" fill="none" stroke="#a4a4a4" stroke-width="0.75"/>
<rect x="913.0" y="407.2" width="4.4" height="4.4" fill="none" stroke="#a4a4a4" stroke-width="0.75"/>
<rect x="918.2" y="405.6" width="6.2" height="7.4" fill="none" stroke="#a4a4a4" stroke-width="0.75"/>
<rect x="925.0" y="407.2" width="4.4" height="4.4" fill="none" stroke="#a4a4a4" stroke-width="0.75"/>
<rect x="846.2" y="413.8" width="6.2" height="7.4" fill="none" stroke="#a4a4a4" stroke-width="0.75"/>
<rect x="853.0" y="415.4" width="4.4" height="4.4" fill="none" stroke="#a4a4a4" stroke-width="0.75"/>
<rect x="858.2" y="413.8" width="6.2" height="7.4" fill="none" stroke="#a4a4a4" stroke-width="0.75"/>
<rect x="865.0" y="415.4" width="4.4" height="4.4" fill="none" stroke="#a4a4a4" stroke-width="0.75"/>
<rect x="870.2" y="413.8" width="6.2" height="7.4" fill="none" stroke="#a4a4a4" stroke-width="0.75"/>
<rect x="877.0" y="415.4" width="4.4" height="4.4" fill="none" stroke="#a4a4a4" stroke-width="0.75"/>
<rect x="882.2" y="413.8" width="6.2" height="7.4" fill="none" stroke="#a4a4a4" stroke-width="0.75"/>
<rect x="889.0" y="415.4" width="4.4" height="4.4" fill="none" stroke="#a4a4a4" stroke-width="0.75"/>
<rect x="894.2" y="413.8" width="6.2" height="7.4" fill="none" stroke="#a4a4a4" stroke-width="0.75"/>
<rect x="901.0" y="415.4" width="4.4" height="4.4" fill="none" stroke="#a4a4a4" stroke-width="0.75"/>
<rect x="906.2" y="413.8" width="6.2" height="7.4" fill="none" stroke="#a4a4a4" stroke-width="0.75"/>
<rect x="913.0" y="415.4" width="4.4" height="4.4" fill="none" stroke="#a4a4a4" stroke-width="0.75"/>
<rect x="918.2" y="413.8" width="6.2" height="7.4" fill="none" stroke="#a4a4a4" stroke-width="0.75"/>
<rect x="925.0" y="415.4" width="4.4" height="4.4" fill="none" stroke="#a4a4a4" stroke-width="0.75"/>
<rect x="846.2" y="429.0" width="6.2" height="7.4" fill="none" stroke="#a4a4a4" stroke-width="0.75"/>
<rect x="853.0" y="430.6" width="4.4" height="4.4" fill="none" stroke="#a4a4a4" stroke-width="0.75"/>
<rect x="858.2" y="429.0" width="6.2" height="7.4" fill="none" stroke="#a4a4a4" stroke-width="0.75"/>
<rect x="865.0" y="430.6" width="4.4" height="4.4" fill="none" stroke="#a4a4a4" stroke-width="0.75"/>
<rect x="870.2" y="429.0" width="6.2" height="7.4" fill="none" stroke="#a4a4a4" stroke-width="0.75"/>
<rect x="877.0" y="430.6" width="4.4" height="4.4" fill="none" stroke="#a4a4a4" stroke-width="0.75"/>
<rect x="882.2" y="429.0" width="6.2" height="7.4" fill="none" stroke="#a4a4a4" stroke-width="0.75"/>
<rect x="889.0" y="430.6" width="4.4" height="4.4" fill="none" stroke="#a4a4a4" stroke-width="0.75"/>
<rect x="894.2" y="429.0" width="6.2" height="7.4" fill="none" stroke="#a4a4a4" stroke-width="0.75"/>
<rect x="901.0" y="430.6" width="4.4" height="4.4" fill="none" stroke="#a4a4a4" stroke-width="0.75"/>
<rect x="906.2" y="429.0" width="6.2" height="7.4" fill="none" stroke="#a4a4a4" stroke-width="0.75"/>
<rect x="913.0" y="430.6" width="4.4" height="4.4" fill="none" stroke="#a4a4a4" stroke-width="0.75"/>
<rect x="918.2" y="429.0" width="6.2" height="7.4" fill="none" stroke="#a4a4a4" stroke-width="0.75"/>
<rect x="925.0" y="430.6" width="4.4" height="4.4" fill="none" stroke="#a4a4a4" stroke-width="0.75"/>
<rect x="846.2" y="437.2" width="6.2" height="7.4" fill="none" stroke="#a4a4a4" stroke-width="0.75"/>
<rect x="853.0" y="438.8" width="4.4" height="4.4" fill="none" stroke="#a4a4a4" stroke-width="0.75"/>
<rect x="858.2" y="437.2" width="6.2" height="7.4" fill="none" stroke="#a4a4a4" stroke-width="0.75"/>
<rect x="865.0" y="438.8" width="4.4" height="4.4" fill="none" stroke="#a4a4a4" stroke-width="0.75"/>
<rect x="870.2" y="437.2" width="6.2" height="7.4" fill="none" stroke="#a4a4a4" stroke-width="0.75"/>
<rect x="877.0" y="438.8" width="4.4" height="4.4" fill="none" stroke="#a4a4a4" stroke-width="0.75"/>
<rect x="882.2" y="437.2" width="6.2" height="7.4" fill="none" stroke="#a4a4a4" stroke-width="0.75"/>
<rect x="889.0" y="438.8" width="4.4" height="4.4" fill="none" stroke="#a4a4a4" stroke-width="0.75"/>
<rect x="894.2" y="437.2" width="6.2" height="7.4" fill="none" stroke="#a4a4a4" stroke-width="0.75"/>
<rect x="901.0" y="438.8" width="4.4" height="4.4" fill="none" stroke="#a4a4a4" stroke-width="0.75"/>
<rect x="906.2" y="437.2" width="6.2" height="7.4" fill="none" stroke="#a4a4a4" stroke-width="0.75"/>
<rect x="913.0" y="438.8" width="4.4" height="4.4" fill="none" stroke="#a4a4a4" stroke-width="0.75"/>
<rect x="918.2" y="437.2" width="6.2" height="7.4" fill="none" stroke="#a4a4a4" stroke-width="0.75"/>
<rect x="925.0" y="438.8" width="4.4" height="4.4" fill="none" stroke="#a4a4a4" stroke-width="0.75"/>
<rect x="851.2" y="452.6" width="6.2" height="7.4" fill="none" stroke="#a4a4a4" stroke-width="0.75"/>
<rect x="858.0" y="454.2" width="4.4" height="4.4" fill="none" stroke="#a4a4a4" stroke-width="0.75"/>
<rect x="863.2" y="452.6" width="6.2" height="7.4" fill="none" stroke="#a4a4a4" stroke-width="0.75"/>
<rect x="870.0" y="454.2" width="4.4" height="4.4" fill="none" stroke="#a4a4a4" stroke-width="0.75"/>
<rect x="875.2" y="452.6" width="6.2" height="7.4" fill="none" stroke="#a4a4a4" stroke-width="0.75"/>
<rect x="882.0" y="454.2" width="4.4" height="4.4" fill="none" stroke="#a4a4a4" stroke-width="0.75"/>
<rect x="887.2" y="452.6" width="6.2" height="7.4" fill="none" stroke="#a4a4a4" stroke-width="0.75"/>
<rect x="894.0" y="454.2" width="4.4" height="4.4" fill="none" stroke="#a4a4a4" stroke-width="0.75"/>
<rect x="899.2" y="452.6" width="6.2" height="7.4" fill="none" stroke="#a4a4a4" stroke-width="0.75"/>
<rect x="906.0" y="454.2" width="4.4" height="4.4" fill="none" stroke="#a4a4a4" stroke-width="0.75"/>
<rect x="911.2" y="452.6" width="6.2" height="7.4" fill="none" stroke="#a4a4a4" stroke-width="0.75"/>
<rect x="918.0" y="454.2" width="4.4" height="4.4" fill="none" stroke="#a4a4a4" stroke-width="0.75"/>
<rect x="851.2" y="460.8" width="6.2" height="7.4" fill="none" stroke="#a4a4a4" stroke-width="0.75"/>
<rect x="858.0" y="462.4" width="4.4" height="4.4" fill="none" stroke="#a4a4a4" stroke-width="0.75"/>
<rect x="863.2" y="460.8" width="6.2" height="7.4" fill="none" stroke="#a4a4a4" stroke-width="0.75"/>
<rect x="870.0" y="462.4" width="4.4" height="4.4" fill="none" stroke="#a4a4a4" stroke-width="0.75"/>
<rect x="875.2" y="460.8" width="6.2" height="7.4" fill="none" stroke="#a4a4a4" stroke-width="0.75"/>
<rect x="882.0" y="462.4" width="4.4" height="4.4" fill="none" stroke="#a4a4a4" stroke-width="0.75"/>
<rect x="887.2" y="460.8" width="6.2" height="7.4" fill="none" stroke="#a4a4a4" stroke-width="0.75"/>
<rect x="894.0" y="462.4" width="4.4" height="4.4" fill="none" stroke="#a4a4a4" stroke-width="0.75"/>
<rect x="899.2" y="460.8" width="6.2" height="7.4" fill="none" stroke="#a4a4a4" stroke-width="0.75"/>
<rect x="906.0" y="462.4" width="4.4" height="4.4" fill="none" stroke="#a4a4a4" stroke-width="0.75"/>
<rect x="911.2" y="460.8" width="6.2" height="7.4" fill="none" stroke="#a4a4a4" stroke-width="0.75"/>
<rect x="918.0" y="462.4" width="4.4" height="4.4" fill="none" stroke="#a4a4a4" stroke-width="0.75"/>
<path d="M816.2 393.7H825.7L830.7 398V451L825.7 455.6H816.2" stroke="#8a8a8a" stroke-width="0.9" fill="none" />
<path d="M818.7 398L865.7 464M818.7 452L858.7 381" stroke="#8a8a8a" stroke-width="0.6" fill="none" stroke-dasharray="2 1"/>
<text x="882.7" y="469.0" font-size="6.5" fill="#e8e8e8" text-anchor="middle" font-weight="bold">普通教室</text>
<rect x="978.2" y="381.3" width="6.2" height="7.4" fill="none" stroke="#a4a4a4" stroke-width="0.75"/>
<rect x="985.0" y="382.9" width="4.4" height="4.4" fill="none" stroke="#a4a4a4" stroke-width="0.75"/>
<rect x="990.2" y="381.3" width="6.2" height="7.4" fill="none" stroke="#a4a4a4" stroke-width="0.75"/>
<rect x="997.0" y="382.9" width="4.4" height="4.4" fill="none" stroke="#a4a4a4" stroke-width="0.75"/>
<rect x="1002.2" y="381.3" width="6.2" height="7.4" fill="none" stroke="#a4a4a4" stroke-width="0.75"/>
<rect x="1009.0" y="382.9" width="4.4" height="4.4" fill="none" stroke="#a4a4a4" stroke-width="0.75"/>
<rect x="1014.2" y="381.3" width="6.2" height="7.4" fill="none" stroke="#a4a4a4" stroke-width="0.75"/>
<rect x="1021.0" y="382.9" width="4.4" height="4.4" fill="none" stroke="#a4a4a4" stroke-width="0.75"/>
<rect x="1026.2" y="381.3" width="6.2" height="7.4" fill="none" stroke="#a4a4a4" stroke-width="0.75"/>
<rect x="1033.0" y="382.9" width="4.4" height="4.4" fill="none" stroke="#a4a4a4" stroke-width="0.75"/>
<rect x="1038.2" y="381.3" width="6.2" height="7.4" fill="none" stroke="#a4a4a4" stroke-width="0.75"/>
<rect x="1045.0" y="382.9" width="4.4" height="4.4" fill="none" stroke="#a4a4a4" stroke-width="0.75"/>
<rect x="978.2" y="389.5" width="6.2" height="7.4" fill="none" stroke="#a4a4a4" stroke-width="0.75"/>
<rect x="985.0" y="391.1" width="4.4" height="4.4" fill="none" stroke="#a4a4a4" stroke-width="0.75"/>
<rect x="990.2" y="389.5" width="6.2" height="7.4" fill="none" stroke="#a4a4a4" stroke-width="0.75"/>
<rect x="997.0" y="391.1" width="4.4" height="4.4" fill="none" stroke="#a4a4a4" stroke-width="0.75"/>
<rect x="1002.2" y="389.5" width="6.2" height="7.4" fill="none" stroke="#a4a4a4" stroke-width="0.75"/>
<rect x="1009.0" y="391.1" width="4.4" height="4.4" fill="none" stroke="#a4a4a4" stroke-width="0.75"/>
<rect x="1014.2" y="389.5" width="6.2" height="7.4" fill="none" stroke="#a4a4a4" stroke-width="0.75"/>
<rect x="1021.0" y="391.1" width="4.4" height="4.4" fill="none" stroke="#a4a4a4" stroke-width="0.75"/>
<rect x="1026.2" y="389.5" width="6.2" height="7.4" fill="none" stroke="#a4a4a4" stroke-width="0.75"/>
<rect x="1033.0" y="391.1" width="4.4" height="4.4" fill="none" stroke="#a4a4a4" stroke-width="0.75"/>
<rect x="1038.2" y="389.5" width="6.2" height="7.4" fill="none" stroke="#a4a4a4" stroke-width="0.75"/>
<rect x="1045.0" y="391.1" width="4.4" height="4.4" fill="none" stroke="#a4a4a4" stroke-width="0.75"/>
<rect x="973.2" y="405.6" width="6.2" height="7.4" fill="none" stroke="#a4a4a4" stroke-width="0.75"/>
<rect x="980.0" y="407.2" width="4.4" height="4.4" fill="none" stroke="#a4a4a4" stroke-width="0.75"/>
<rect x="985.2" y="405.6" width="6.2" height="7.4" fill="none" stroke="#a4a4a4" stroke-width="0.75"/>
<rect x="992.0" y="407.2" width="4.4" height="4.4" fill="none" stroke="#a4a4a4" stroke-width="0.75"/>
<rect x="997.2" y="405.6" width="6.2" height="7.4" fill="none" stroke="#a4a4a4" stroke-width="0.75"/>
<rect x="1004.0" y="407.2" width="4.4" height="4.4" fill="none" stroke="#a4a4a4" stroke-width="0.75"/>
<rect x="1009.2" y="405.6" width="6.2" height="7.4" fill="none" stroke="#a4a4a4" stroke-width="0.75"/>
<rect x="1016.0" y="407.2" width="4.4" height="4.4" fill="none" stroke="#a4a4a4" stroke-width="0.75"/>
<rect x="1021.2" y="405.6" width="6.2" height="7.4" fill="none" stroke="#a4a4a4" stroke-width="0.75"/>
<rect x="1028.0" y="407.2" width="4.4" height="4.4" fill="none" stroke="#a4a4a4" stroke-width="0.75"/>
<rect x="1033.2" y="405.6" width="6.2" height="7.4" fill="none" stroke="#a4a4a4" stroke-width="0.75"/>
<rect x="1040.0" y="407.2" width="4.4" height="4.4" fill="none" stroke="#a4a4a4" stroke-width="0.75"/>
<rect x="1045.2" y="405.6" width="6.2" height="7.4" fill="none" stroke="#a4a4a4" stroke-width="0.75"/>
<rect x="1052.0" y="407.2" width="4.4" height="4.4" fill="none" stroke="#a4a4a4" stroke-width="0.75"/>
<rect x="973.2" y="413.8" width="6.2" height="7.4" fill="none" stroke="#a4a4a4" stroke-width="0.75"/>
<rect x="980.0" y="415.4" width="4.4" height="4.4" fill="none" stroke="#a4a4a4" stroke-width="0.75"/>
<rect x="985.2" y="413.8" width="6.2" height="7.4" fill="none" stroke="#a4a4a4" stroke-width="0.75"/>
<rect x="992.0" y="415.4" width="4.4" height="4.4" fill="none" stroke="#a4a4a4" stroke-width="0.75"/>
<rect x="997.2" y="413.8" width="6.2" height="7.4" fill="none" stroke="#a4a4a4" stroke-width="0.75"/>
<rect x="1004.0" y="415.4" width="4.4" height="4.4" fill="none" stroke="#a4a4a4" stroke-width="0.75"/>
<rect x="1009.2" y="413.8" width="6.2" height="7.4" fill="none" stroke="#a4a4a4" stroke-width="0.75"/>
<rect x="1016.0" y="415.4" width="4.4" height="4.4" fill="none" stroke="#a4a4a4" stroke-width="0.75"/>
<rect x="1021.2" y="413.8" width="6.2" height="7.4" fill="none" stroke="#a4a4a4" stroke-width="0.75"/>
<rect x="1028.0" y="415.4" width="4.4" height="4.4" fill="none" stroke="#a4a4a4" stroke-width="0.75"/>
<rect x="1033.2" y="413.8" width="6.2" height="7.4" fill="none" stroke="#a4a4a4" stroke-width="0.75"/>
<rect x="1040.0" y="415.4" width="4.4" height="4.4" fill="none" stroke="#a4a4a4" stroke-width="0.75"/>
<rect x="1045.2" y="413.8" width="6.2" height="7.4" fill="none" stroke="#a4a4a4" stroke-width="0.75"/>
<rect x="1052.0" y="415.4" width="4.4" height="4.4" fill="none" stroke="#a4a4a4" stroke-width="0.75"/>
<rect x="973.2" y="429.0" width="6.2" height="7.4" fill="none" stroke="#a4a4a4" stroke-width="0.75"/>
<rect x="980.0" y="430.6" width="4.4" height="4.4" fill="none" stroke="#a4a4a4" stroke-width="0.75"/>
<rect x="985.2" y="429.0" width="6.2" height="7.4" fill="none" stroke="#a4a4a4" stroke-width="0.75"/>
<rect x="992.0" y="430.6" width="4.4" height="4.4" fill="none" stroke="#a4a4a4" stroke-width="0.75"/>
<rect x="997.2" y="429.0" width="6.2" height="7.4" fill="none" stroke="#a4a4a4" stroke-width="0.75"/>
<rect x="1004.0" y="430.6" width="4.4" height="4.4" fill="none" stroke="#a4a4a4" stroke-width="0.75"/>
<rect x="1009.2" y="429.0" width="6.2" height="7.4" fill="none" stroke="#a4a4a4" stroke-width="0.75"/>
<rect x="1016.0" y="430.6" width="4.4" height="4.4" fill="none" stroke="#a4a4a4" stroke-width="0.75"/>
<rect x="1021.2" y="429.0" width="6.2" height="7.4" fill="none" stroke="#a4a4a4" stroke-width="0.75"/>
<rect x="1028.0" y="430.6" width="4.4" height="4.4" fill="none" stroke="#a4a4a4" stroke-width="0.75"/>
<rect x="1033.2" y="429.0" width="6.2" height="7.4" fill="none" stroke="#a4a4a4" stroke-width="0.75"/>
<rect x="1040.0" y="430.6" width="4.4" height="4.4" fill="none" stroke="#a4a4a4" stroke-width="0.75"/>
<rect x="1045.2" y="429.0" width="6.2" height="7.4" fill="none" stroke="#a4a4a4" stroke-width="0.75"/>
<rect x="1052.0" y="430.6" width="4.4" height="4.4" fill="none" stroke="#a4a4a4" stroke-width="0.75"/>
<rect x="973.2" y="437.2" width="6.2" height="7.4" fill="none" stroke="#a4a4a4" stroke-width="0.75"/>
<rect x="980.0" y="438.8" width="4.4" height="4.4" fill="none" stroke="#a4a4a4" stroke-width="0.75"/>
<rect x="985.2" y="437.2" width="6.2" height="7.4" fill="none" stroke="#a4a4a4" stroke-width="0.75"/>
<rect x="992.0" y="438.8" width="4.4" height="4.4" fill="none" stroke="#a4a4a4" stroke-width="0.75"/>
<rect x="997.2" y="437.2" width="6.2" height="7.4" fill="none" stroke="#a4a4a4" stroke-width="0.75"/>
<rect x="1004.0" y="438.8" width="4.4" height="4.4" fill="none" stroke="#a4a4a4" stroke-width="0.75"/>
<rect x="1009.2" y="437.2" width="6.2" height="7.4" fill="none" stroke="#a4a4a4" stroke-width="0.75"/>
<rect x="1016.0" y="438.8" width="4.4" height="4.4" fill="none" stroke="#a4a4a4" stroke-width="0.75"/>
<rect x="1021.2" y="437.2" width="6.2" height="7.4" fill="none" stroke="#a4a4a4" stroke-width="0.75"/>
<rect x="1028.0" y="438.8" width="4.4" height="4.4" fill="none" stroke="#a4a4a4" stroke-width="0.75"/>
<rect x="1033.2" y="437.2" width="6.2" height="7.4" fill="none" stroke="#a4a4a4" stroke-width="0.75"/>
<rect x="1040.0" y="438.8" width="4.4" height="4.4" fill="none" stroke="#a4a4a4" stroke-width="0.75"/>
<rect x="1045.2" y="437.2" width="6.2" height="7.4" fill="none" stroke="#a4a4a4" stroke-width="0.75"/>
<rect x="1052.0" y="438.8" width="4.4" height="4.4" fill="none" stroke="#a4a4a4" stroke-width="0.75"/>
<rect x="978.2" y="452.6" width="6.2" height="7.4" fill="none" stroke="#a4a4a4" stroke-width="0.75"/>
<rect x="985.0" y="454.2" width="4.4" height="4.4" fill="none" stroke="#a4a4a4" stroke-width="0.75"/>
<rect x="990.2" y="452.6" width="6.2" height="7.4" fill="none" stroke="#a4a4a4" stroke-width="0.75"/>
<rect x="997.0" y="454.2" width="4.4" height="4.4" fill="none" stroke="#a4a4a4" stroke-width="0.75"/>
<rect x="1002.2" y="452.6" width="6.2" height="7.4" fill="none" stroke="#a4a4a4" stroke-width="0.75"/>
<rect x="1009.0" y="454.2" width="4.4" height="4.4" fill="none" stroke="#a4a4a4" stroke-width="0.75"/>
<rect x="1014.2" y="452.6" width="6.2" height="7.4" fill="none" stroke="#a4a4a4" stroke-width="0.75"/>
<rect x="1021.0" y="454.2" width="4.4" height="4.4" fill="none" stroke="#a4a4a4" stroke-width="0.75"/>
<rect x="1026.2" y="452.6" width="6.2" height="7.4" fill="none" stroke="#a4a4a4" stroke-width="0.75"/>
<rect x="1033.0" y="454.2" width="4.4" height="4.4" fill="none" stroke="#a4a4a4" stroke-width="0.75"/>
<rect x="1038.2" y="452.6" width="6.2" height="7.4" fill="none" stroke="#a4a4a4" stroke-width="0.75"/>
<rect x="1045.0" y="454.2" width="4.4" height="4.4" fill="none" stroke="#a4a4a4" stroke-width="0.75"/>
<rect x="978.2" y="460.8" width="6.2" height="7.4" fill="none" stroke="#a4a4a4" stroke-width="0.75"/>
<rect x="985.0" y="462.4" width="4.4" height="4.4" fill="none" stroke="#a4a4a4" stroke-width="0.75"/>
<rect x="990.2" y="460.8" width="6.2" height="7.4" fill="none" stroke="#a4a4a4" stroke-width="0.75"/>
<rect x="997.0" y="462.4" width="4.4" height="4.4" fill="none" stroke="#a4a4a4" stroke-width="0.75"/>
<rect x="1002.2" y="460.8" width="6.2" height="7.4" fill="none" stroke="#a4a4a4" stroke-width="0.75"/>
<rect x="1009.0" y="462.4" width="4.4" height="4.4" fill="none" stroke="#a4a4a4" stroke-width="0.75"/>
<rect x="1014.2" y="460.8" width="6.2" height="7.4" fill="none" stroke="#a4a4a4" stroke-width="0.75"/>
<rect x="1021.0" y="462.4" width="4.4" height="4.4" fill="none" stroke="#a4a4a4" stroke-width="0.75"/>
<rect x="1026.2" y="460.8" width="6.2" height="7.4" fill="none" stroke="#a4a4a4" stroke-width="0.75"/>
<rect x="1033.0" y="462.4" width="4.4" height="4.4" fill="none" stroke="#a4a4a4" stroke-width="0.75"/>
<rect x="1038.2" y="460.8" width="6.2" height="7.4" fill="none" stroke="#a4a4a4" stroke-width="0.75"/>
<rect x="1045.0" y="462.4" width="4.4" height="4.4" fill="none" stroke="#a4a4a4" stroke-width="0.75"/>
<path d="M943.2 393.7H952.7L957.7 398V451L952.7 455.6H943.2" stroke="#8a8a8a" stroke-width="0.9" fill="none" />
<path d="M945.7 398L992.7 464M945.7 452L985.7 381" stroke="#8a8a8a" stroke-width="0.6" fill="none" stroke-dasharray="2 1"/>
<text x="1009.7" y="469.0" font-size="6.5" fill="#e8e8e8" text-anchor="middle" font-weight="bold">普通教室</text>
<path d="M588 193V238.3H661.7V193M588 207.2H661.7" stroke="#00c8d0" stroke-width="1" fill="none" />
<line x1="612.0" y1="193.0" x2="612.0" y2="207.0" stroke="#00c8d0" stroke-width="1.2" />
<line x1="636.5" y1="193.0" x2="636.5" y2="207.0" stroke="#00c8d0" stroke-width="1.2" />
<line x1="612.0" y1="226.0" x2="612.0" y2="238.3" stroke="#00c8d0" stroke-width="1.2" />
<line x1="636.5" y1="226.0" x2="636.5" y2="238.3" stroke="#00c8d0" stroke-width="1.2" />
<path d="M588 195.2A12.0 12.0 0 0 1 600.0 207.2M600.0 207.2A12.0 12.0 0 0 1 612 195.2" stroke="#00c8d0" stroke-width="0.8" fill="none" />
<path d="M588 226.3A12.0 12.0 0 0 1 600.0 238.3M600.0 238.3A12.0 12.0 0 0 1 612 226.3" stroke="#00c8d0" stroke-width="0.8" fill="none" />
<path d="M612 194.9A12.2 12.2 0 0 1 624.2 207.2M624.2 207.2A12.2 12.2 0 0 1 636.5 194.9" stroke="#00c8d0" stroke-width="0.8" fill="none" />
<path d="M612 226.1A12.2 12.2 0 0 1 624.2 238.3M624.2 238.3A12.2 12.2 0 0 1 636.5 226.1" stroke="#00c8d0" stroke-width="0.8" fill="none" />
<path d="M636.5 194.6A12.6 12.6 0 0 1 649.1 207.2M649.1 207.2A12.6 12.6 0 0 1 661.7 194.6" stroke="#00c8d0" stroke-width="0.8" fill="none" />
<path d="M636.5 225.7A12.6 12.6 0 0 1 649.1 238.3M649.1 238.3A12.6 12.6 0 0 1 661.7 225.7" stroke="#00c8d0" stroke-width="0.8" fill="none" />
<path d="M588 476.5V486M661.7 476.5V486" stroke="#00c8d0" stroke-width="1" fill="none" />
<path d="M588 488.5A12.0 12.0 0 0 0 600.0 476.5M600.0 476.5A12.0 12.0 0 0 0 612 488.5" stroke="#00c8d0" stroke-width="0.8" fill="none" />
<path d="M612 488.8A12.2 12.2 0 0 0 624.2 476.5M624.2 476.5A12.2 12.2 0 0 0 636.5 488.8" stroke="#00c8d0" stroke-width="0.8" fill="none" />
<path d="M636.5 489.1A12.6 12.6 0 0 0 649.1 476.5M649.1 476.5A12.6 12.6 0 0 0 661.7 489.1" stroke="#00c8d0" stroke-width="0.8" fill="none" />
<line x1="612.0" y1="476.5" x2="612.0" y2="488.0" stroke="#00c8d0" stroke-width="1.2" />
<line x1="636.5" y1="476.5" x2="636.5" y2="488.0" stroke="#00c8d0" stroke-width="1.2" />
<path d="M258.5 207.3V194.2A10.5 10.5 0 0 1 269 204.7M279.5 207.3V194.2A10.5 10.5 0 0 0 269 204.7" stroke="#00c8d0" stroke-width="0.9" fill="none" />
<path d="M911.4 205V194.4A10.6 10.6 0 0 1 922 205M932.6 205V194.4A10.6 10.6 0 0 0 922 205" stroke="#00c8d0" stroke-width="0.9" fill="none" />
<text x="624.0" y="412.0" font-size="7" fill="#e8e8e8" text-anchor="middle" >门厅</text>
<path d="M650 390H672L668 394z" stroke="#00a400" stroke-width="0.8" fill="none" />
<text x="658.0" y="387.0" font-size="3.5" fill="#e8e8e8" text-anchor="middle" >±0.000</text>
<path d="M172.5 275A10 10 0 0 0 172.5 285A10 10 0 0 0 172.5 295" stroke="#00c8d0" stroke-width="0.9" fill="none" />
<path d="M172.5 328A10 10 0 0 0 172.5 338A10 10 0 0 0 172.5 348" stroke="#00c8d0" stroke-width="0.9" fill="none" />
<rect x="171.0" y="291.0" width="4.5" height="14.0" stroke="#00c8d0" stroke-width="0.8" fill="none" />
<path d="M204.5 281V269L228.7 255.5" stroke="#c8b400" stroke-width="0.9" fill="none" />
<line x1="221.5" y1="259.5" x2="228.7" y2="259.5" stroke="#c8b400" stroke-width="0.8" />
<line x1="215.3" y1="263.0" x2="228.7" y2="263.0" stroke="#c8b400" stroke-width="0.8" />
<line x1="209.0" y1="266.5" x2="228.7" y2="266.5" stroke="#c8b400" stroke-width="0.8" />
<line x1="204.5" y1="270.0" x2="228.7" y2="270.0" stroke="#c8b400" stroke-width="0.8" />
<line x1="204.5" y1="273.5" x2="228.7" y2="273.5" stroke="#c8b400" stroke-width="0.8" />
<line x1="204.5" y1="277.0" x2="228.7" y2="277.0" stroke="#c8b400" stroke-width="0.8" />
<line x1="204.5" y1="280.6" x2="228.7" y2="280.6" stroke="#c8b400" stroke-width="0.8" />
<line x1="216.5" y1="262.0" x2="216.5" y2="283.0" stroke="#30d030" stroke-width="0.9" />
<path d="M214.8 266L216.5 262L218.2 266Z" stroke="#30d030" stroke-width="0.6" fill="#30d030" />
<line x1="171.0" y1="166.0" x2="226.0" y2="312.0" stroke="#d8d8d8" stroke-width="0.6" />
<path d="M185 311.3H226" stroke="#30b0c0" stroke-width="0.8" fill="none" stroke-dasharray="3 2"/>
<rect x="202.7" y="292.5" width="5.5" height="5.0" stroke="#10c010" stroke-width="0.8" fill="none" />
<rect x="202.7" y="302.0" width="5.5" height="5.0" stroke="#10c010" stroke-width="0.8" fill="none" />
<rect x="202.7" y="314.0" width="5.5" height="5.0" stroke="#10c010" stroke-width="0.8" fill="none" />
<rect x="202.7" y="322.0" width="5.5" height="5.0" stroke="#10c010" stroke-width="0.8" fill="none" />
<rect x="330.6" y="359.4" width="5.5" height="5.0" stroke="#10c010" stroke-width="0.8" fill="none" />
<rect x="459.0" y="316.0" width="5.5" height="5.0" stroke="#10c010" stroke-width="0.8" fill="none" />
<rect x="464.0" y="340.0" width="5.5" height="5.0" stroke="#10c010" stroke-width="0.8" fill="none" />
<rect x="476.0" y="340.0" width="5.5" height="5.0" stroke="#10c010" stroke-width="0.8" fill="none" />
<rect x="497.0" y="340.0" width="5.5" height="5.0" stroke="#10c010" stroke-width="0.8" fill="none" />
<rect x="510.0" y="340.0" width="5.5" height="5.0" stroke="#10c010" stroke-width="0.8" fill="none" />
<rect x="721.0" y="338.0" width="5.5" height="5.0" stroke="#10c010" stroke-width="0.8" fill="none" />
<rect x="735.0" y="338.0" width="5.5" height="5.0" stroke="#10c010" stroke-width="0.8" fill="none" />
<rect x="760.0" y="338.0" width="5.5" height="5.0" stroke="#10c010" stroke-width="0.8" fill="none" />
<rect x="772.0" y="338.0" width="5.5" height="5.0" stroke="#10c010" stroke-width="0.8" fill="none" />
<rect x="753.0" y="362.0" width="5.5" height="5.0" stroke="#10c010" stroke-width="0.8" fill="none" />
<rect x="910.0" y="295.0" width="5.5" height="5.0" stroke="#10c010" stroke-width="0.8" fill="none" />
<rect x="910.0" y="304.0" width="5.5" height="5.0" stroke="#10c010" stroke-width="0.8" fill="none" />
<rect x="910.0" y="317.0" width="5.5" height="5.0" stroke="#10c010" stroke-width="0.8" fill="none" />
<rect x="910.0" y="326.0" width="5.5" height="5.0" stroke="#10c010" stroke-width="0.8" fill="none" />
<rect x="948.0" y="317.0" width="5.5" height="5.0" stroke="#10c010" stroke-width="0.8" fill="none" />
<rect x="1012.0" y="318.0" width="5.5" height="5.0" stroke="#10c010" stroke-width="0.8" fill="none" />
<line x1="209.0" y1="302.0" x2="232.0" y2="313.0" stroke="#980000" stroke-width="0.8" />
<line x1="209.0" y1="313.0" x2="232.0" y2="313.0" stroke="#980000" stroke-width="0.8" />
<line x1="467.0" y1="345.0" x2="480.0" y2="362.0" stroke="#980000" stroke-width="0.8" />
<line x1="490.0" y1="345.0" x2="480.0" y2="362.0" stroke="#980000" stroke-width="0.8" />
<line x1="738.0" y1="343.0" x2="753.0" y2="362.0" stroke="#980000" stroke-width="0.8" />
<line x1="763.0" y1="343.0" x2="753.0" y2="362.0" stroke="#980000" stroke-width="0.8" />
<line x1="916.0" y1="306.0" x2="940.0" y2="316.0" stroke="#980000" stroke-width="0.8" />
<line x1="916.0" y1="319.0" x2="948.0" y2="319.0" stroke="#980000" stroke-width="0.8" />
<path d="M363 150V326.2H1000" stroke="#980000" stroke-width="0.9" fill="none" />
<path d="M365.6 268.7V323.5H1050" stroke="#009498" stroke-width="0.8" fill="none" />
<line x1="460.0" y1="320.0" x2="460.0" y2="362.0" stroke="#2aa0b0" stroke-width="0.8" stroke-dasharray="3 2"/>
<line x1="752.0" y1="310.0" x2="752.0" y2="362.0" stroke="#2aa0b0" stroke-width="0.8" stroke-dasharray="3 2"/>
<rect x="708.7" y="274.0" width="45.3" height="40.0" stroke="#b8b8b8" stroke-width="0.9" fill="none" />
<rect x="712.0" y="276.0" width="14.0" height="36.0" stroke="#b8b8b8" stroke-width="0.8" fill="none" />
<rect x="728.0" y="276.0" width="24.0" height="36.0" stroke="#b8b8b8" stroke-width="0.8" fill="none" />
<rect x="730.0" y="277.0" width="14.0" height="4.0" stroke="#f07010" stroke-width="1" fill="#f07010" />
<rect x="744.0" y="277.0" width="8.0" height="3.0" stroke="#30e030" stroke-width="1" fill="#30e030" />
<rect x="746.0" y="287.0" width="4.0" height="7.0" stroke="#30e030" stroke-width="0.8" fill="none" />
<rect x="815.7" y="207.6" width="36.0" height="43.0" stroke="#b8b8b8" stroke-width="0.8" fill="none" />
<rect x="853.0" y="207.6" width="36.7" height="43.0" stroke="#b8b8b8" stroke-width="0.8" fill="none" />
<path d="M818 216H831L836 220L831 224H818" stroke="#d010d0" stroke-width="0.9" fill="none" />
<rect x="822.0" y="218.0" width="5.0" height="3.5" stroke="#d010d0" stroke-width="0.8" fill="none" />
<path d="M818 227H831L836 231L831 235H818" stroke="#d010d0" stroke-width="0.9" fill="none" />
<rect x="822.0" y="229.0" width="5.0" height="3.5" stroke="#d010d0" stroke-width="0.8" fill="none" />
<path d="M886 216H873L868 220L873 224H886" stroke="#d010d0" stroke-width="0.9" fill="none" />
<rect x="876.0" y="218.0" width="5.0" height="3.5" stroke="#d010d0" stroke-width="0.8" fill="none" />
<rect x="882.0" y="228.0" width="6.0" height="12.0" stroke="#d010d0" stroke-width="0.8" fill="none" />
<text x="847.0" y="231.0" font-size="6" fill="#e8e8e8" text-anchor="middle" >女卫</text>
<text x="870.0" y="231.0" font-size="6" fill="#e8e8e8" text-anchor="middle" >男卫</text>
<ellipse cx="820.5" cy="256" rx="3.5" ry="4.5" stroke="#d010d0" fill="none"/><ellipse cx="820.5" cy="267" rx="3.5" ry="4.5" stroke="#d010d0" fill="none"/>
<line x1="826.0" y1="250.0" x2="826.0" y2="276.0" stroke="#d010d0" stroke-width="0.8" />
<rect x="881.0" y="251.0" width="7.0" height="7.0" stroke="#d010d0" stroke-width="0.8" fill="none" />
<rect x="815.7" y="277.0" width="30.0" height="37.0" stroke="#b8b8b8" stroke-width="0.8" fill="none" />
<rect x="861.0" y="277.0" width="28.7" height="37.0" stroke="#b8b8b8" stroke-width="0.8" fill="none" />
<circle cx="832" cy="296" r="10" stroke="#c8c8c8" stroke-width="0.7" fill="none" stroke-dasharray="2 1.5"/>
<rect x="817.0" y="290.0" width="6.0" height="8.0" stroke="#d010d0" stroke-width="0.8" fill="none" />
<rect x="836.0" y="281.0" width="5.0" height="6.0" stroke="#d010d0" stroke-width="0.8" fill="none" />
<text x="832.0" y="299.0" font-size="6" fill="#e8e8e8" text-anchor="middle" >残卫</text>
<text x="873.0" y="299.0" font-size="6" fill="#e8e8e8" text-anchor="middle" >饮水处</text>
<rect x="884.0" y="282.0" width="4.0" height="26.0" stroke="#d010d0" stroke-width="0.8" fill="none" />
<path d="M890 291.5V280L916 266.7V291.5Z" stroke="#c8b800" stroke-width="0.9" fill="none" />
<line x1="890.0" y1="270.0" x2="916.0" y2="270.0" stroke="#c8b800" stroke-width="0.8" />
<line x1="890.0" y1="273.2" x2="916.0" y2="273.2" stroke="#c8b800" stroke-width="0.8" />
<line x1="890.0" y1="276.4" x2="916.0" y2="276.4" stroke="#c8b800" stroke-width="0.8" />
<line x1="890.0" y1="279.6" x2="916.0" y2="279.6" stroke="#c8b800" stroke-width="0.8" />
<line x1="890.0" y1="282.8" x2="916.0" y2="282.8" stroke="#c8b800" stroke-width="0.8" />
<line x1="890.0" y1="286.0" x2="916.0" y2="286.0" stroke="#c8b800" stroke-width="0.8" />
<line x1="890.0" y1="289.2" x2="916.0" y2="289.2" stroke="#c8b800" stroke-width="0.8" />
<line x1="903.0" y1="266.0" x2="903.0" y2="292.0" stroke="#30d030" stroke-width="0.8" />
<rect x="916.0" y="250.0" width="25.5" height="41.3" stroke="#b8b8b8" stroke-width="0.8" fill="none" />
<rect x="943.6" y="206.0" width="70.7" height="74.0" stroke="#b8b8b8" stroke-width="0.8" fill="none" />
<rect x="1015.4" y="206.0" width="57.6" height="74.0" stroke="#b8b8b8" stroke-width="0.8" fill="none" />
<rect x="944.6" y="217.0" width="9.0" height="62.0" stroke="#d010d0" stroke-width="0.9" fill="none" />
<rect x="947.0" y="219.0" width="4.0" height="58.0" stroke="#d010d0" stroke-width="0.7" fill="none" />
<rect x="970.0" y="208.0" width="12.0" height="49.0" stroke="#d010d0" stroke-width="0.9" fill="none" />
<rect x="973.0" y="210.0" width="6.0" height="45.0" stroke="#d010d0" stroke-width="0.7" fill="none" />
<path d="M1014.3 213.5H996.8L991.8 218.5L996.8 223.5H1014.3" stroke="#d010d0" stroke-width="0.9" fill="none" />
<rect x="1003.8" y="216.8" width="7.0" height="3.4" stroke="#d010d0" stroke-width="0.8" fill="none" />
<path d="M1014.3 225.4H996.8L991.8 230.4L996.8 235.4H1014.3" stroke="#d010d0" stroke-width="0.9" fill="none" />
<rect x="1003.8" y="228.7" width="7.0" height="3.4" stroke="#d010d0" stroke-width="0.8" fill="none" />
<path d="M1014.3 237.3H996.8L991.8 242.3L996.8 247.3H1014.3" stroke="#d010d0" stroke-width="0.9" fill="none" />
<rect x="1003.8" y="240.6" width="7.0" height="3.4" stroke="#d010d0" stroke-width="0.8" fill="none" />
<path d="M1014.3 249.2H996.8L991.8 254.2L996.8 259.2H1014.3" stroke="#d010d0" stroke-width="0.9" fill="none" />
<rect x="1003.8" y="252.5" width="7.0" height="3.4" stroke="#d010d0" stroke-width="0.8" fill="none" />
<path d="M1014.3 261.1H996.8L991.8 266.1L996.8 271.1H1014.3" stroke="#d010d0" stroke-width="0.9" fill="none" />
<rect x="1003.8" y="264.4" width="7.0" height="3.4" stroke="#d010d0" stroke-width="0.8" fill="none" />
<path d="M1017 213.5H1035L1040 218.5L1035 223.5H1017" stroke="#d010d0" stroke-width="0.9" fill="none" />
<rect x="1021.0" y="216.8" width="7.0" height="3.4" stroke="#d010d0" stroke-width="0.8" fill="none" />
<path d="M1017 225.4H1035L1040 230.4L1035 235.4H1017" stroke="#d010d0" stroke-width="0.9" fill="none" />
<rect x="1021.0" y="228.7" width="7.0" height="3.4" stroke="#d010d0" stroke-width="0.8" fill="none" />
<path d="M1017 237.3H1035L1040 242.3L1035 247.3H1017" stroke="#d010d0" stroke-width="0.9" fill="none" />
<rect x="1021.0" y="240.6" width="7.0" height="3.4" stroke="#d010d0" stroke-width="0.8" fill="none" />
<path d="M1017 249.2H1035L1040 254.2L1035 259.2H1017" stroke="#d010d0" stroke-width="0.9" fill="none" />
<rect x="1021.0" y="252.5" width="7.0" height="3.4" stroke="#d010d0" stroke-width="0.8" fill="none" />
<path d="M1017 261.1H1035L1040 266.1L1035 271.1H1017" stroke="#d010d0" stroke-width="0.9" fill="none" />
<rect x="1021.0" y="264.4" width="7.0" height="3.4" stroke="#d010d0" stroke-width="0.8" fill="none" />
<path d="M1071.5 213.5H1054L1049 218.5L1054 223.5H1071.5" stroke="#d010d0" stroke-width="0.9" fill="none" />
<rect x="1061.0" y="216.8" width="7.0" height="3.4" stroke="#d010d0" stroke-width="0.8" fill="none" />
<path d="M1071.5 225.4H1054L1049 230.4L1054 235.4H1071.5" stroke="#d010d0" stroke-width="0.9" fill="none" />
<rect x="1061.0" y="228.7" width="7.0" height="3.4" stroke="#d010d0" stroke-width="0.8" fill="none" />
<path d="M1071.5 237.3H1054L1049 242.3L1054 247.3H1071.5" stroke="#d010d0" stroke-width="0.9" fill="none" />
<rect x="1061.0" y="240.6" width="7.0" height="3.4" stroke="#d010d0" stroke-width="0.8" fill="none" />
<path d="M1071.5 249.2H1054L1049 254.2L1054 259.2H1071.5" stroke="#d010d0" stroke-width="0.9" fill="none" />
<rect x="1061.0" y="252.5" width="7.0" height="3.4" stroke="#d010d0" stroke-width="0.8" fill="none" />
<path d="M1071.5 261.1H1054L1049 266.1L1054 271.1H1071.5" stroke="#d010d0" stroke-width="0.9" fill="none" />
<rect x="1061.0" y="264.4" width="7.0" height="3.4" stroke="#d010d0" stroke-width="0.8" fill="none" />
<text x="974.0" y="268.0" font-size="6" fill="#e8e8e8" text-anchor="middle" >男卫</text>
<text x="1045.0" y="268.0" font-size="6" fill="#e8e8e8" text-anchor="middle" >女卫</text>
<ellipse cx="948" cy="288" rx="3" ry="4" stroke="#d010d0" stroke-width="0.9" fill="none"/>
<ellipse cx="948" cy="298" rx="3" ry="4" stroke="#d010d0" stroke-width="0.9" fill="none"/>
<rect x="992.0" y="282.0" width="20.0" height="6.0" stroke="#d010d0" stroke-width="0.8" fill="none" />
<rect x="1018.0" y="282.0" width="7.0" height="30.0" stroke="#d010d0" stroke-width="0.8" fill="none" />
<rect x="1066.0" y="282.0" width="7.0" height="18.0" stroke="#d010d0" stroke-width="0.8" fill="none" />
<rect x="999.0" y="306.0" width="14.0" height="6.0" stroke="#d010d0" stroke-width="0.8" fill="none" />
<path d="M969 280A9 9 0 0 0 977 292" stroke="#00c8d0" stroke-width="0.9" fill="none" />
<path d="M1038 280A9 9 0 0 0 1046 292" stroke="#00c8d0" stroke-width="0.9" fill="none" />
<rect x="1073.0" y="325.0" width="3.0" height="25.0" stroke="#00c8d0" stroke-width="0.9" fill="none" />
<line x1="1073.0" y1="377.0" x2="1073.0" y2="464.0" stroke="#b8b8b8" stroke-width="0.9" />
<text x="337.0" y="218.0" font-size="7" fill="#e8e8e8" text-anchor="middle" >值班室</text>
<text x="400.0" y="220.0" font-size="7" fill="#e8e8e8" text-anchor="middle" >办公室</text>
<text x="496.0" y="218.0" font-size="7" fill="#e8e8e8" text-anchor="middle" >学生活动室</text>
<text x="720.0" y="219.0" font-size="7" fill="#e8e8e8" text-anchor="middle" >办公室</text>
<text x="780.0" y="219.0" font-size="7" fill="#e8e8e8" text-anchor="middle" >办公室</text>
<text x="104" y="159.5" font-size="6" fill="#f2f2f2" font-weight="bold" textLength="64.0" lengthAdjust="spacingAndGlyphs">楼梯间疏散照明设计,应符合下列要求:</text>
<text x="104" y="167.5" font-size="6" fill="#f2f2f2" font-weight="bold" textLength="67.5" lengthAdjust="spacingAndGlyphs">下电应急照明配电箱内两只独立的电源</text>
<text x="104" y="175.5" font-size="6" fill="#f2f2f2" font-weight="bold" textLength="65.0" lengthAdjust="spacingAndGlyphs">各电应急照明配置应急照明灯具型号</text>
<text x="104" y="183.5" font-size="6" fill="#f2f2f2" font-weight="bold" textLength="52.0" lengthAdjust="spacingAndGlyphs">应急照明线缆电线管应做防火。</text>
<text x="104" y="191.5" font-size="6" fill="#f2f2f2" font-weight="bold" textLength="48.0" lengthAdjust="spacingAndGlyphs">大楼消防监控厂家要求。</text>
<line x1="104.0" y1="202.0" x2="128.0" y2="202.0" stroke="#00a400" stroke-width="1" />
<line x1="104.0" y1="209.5" x2="132.0" y2="209.5" stroke="#00a400" stroke-width="1" />
<line x1="104.0" y1="470.7" x2="132.0" y2="470.7" stroke="#00a400" stroke-width="1" />
<line x1="104.0" y1="477.3" x2="128.0" y2="477.3" stroke="#00a400" stroke-width="1" />
<text x="369.0" y="152.0" font-size="5" fill="#e8e8e8" text-anchor="start" font-weight="bold">消防设备图例</text>
<line x1="363.0" y1="154.5" x2="453.0" y2="154.5" stroke="#c8c8c8" stroke-width="0.6" />
<text x="368.0" y="160.8" font-size="4.6" fill="#e8e8e8" text-anchor="start" font-weight="bold">GBC50072-2018</text>
<text x="416.0" y="160.8" font-size="4.4" fill="#e8e8e8" text-anchor="start" font-weight="bold"></text>
<text x="368.0" y="166.6" font-size="4.6" fill="#e8e8e8" text-anchor="start" font-weight="bold">消火栓按钮控制线</text>
<text x="416.0" y="166.6" font-size="4.4" fill="#e8e8e8" text-anchor="start" font-weight="bold">NH-RVV-4x1.5</text>
<text x="368.0" y="172.3" font-size="4.6" fill="#e8e8e8" text-anchor="start" font-weight="bold">防 报警专用电话</text>
<text x="416.0" y="172.3" font-size="4.4" fill="#e8e8e8" text-anchor="start" font-weight="bold">NH-RVVP-4x1.5</text>
<text x="368.0" y="178.1" font-size="4.6" fill="#e8e8e8" text-anchor="start" font-weight="bold">消防广播线</text>
<text x="416.0" y="178.1" font-size="4.4" fill="#e8e8e8" text-anchor="start" font-weight="bold">NH-RVSP-4x1.5</text>
<text x="368.0" y="183.8" font-size="4.6" fill="#e8e8e8" text-anchor="start" font-weight="bold">水流指示器控制线</text>
<text x="416.0" y="183.8" font-size="4.4" fill="#e8e8e8" text-anchor="start" font-weight="bold">NH-RVV-4x1.5</text>
<text x="368.0" y="189.6" font-size="4.6" fill="#e8e8e8" text-anchor="start" font-weight="bold">消防水箱液位开关控制线</text>
<text x="416.0" y="189.6" font-size="4.4" fill="#e8e8e8" text-anchor="start" font-weight="bold">NH-RVV-4x1.5</text>
<text x="340.0" y="236.0" font-size="4.5" fill="#e8e8e8" text-anchor="middle" font-weight="bold">消防控制室</text>
<text x="340.0" y="241.8" font-size="4.5" fill="#e8e8e8" text-anchor="middle" font-weight="bold">消防专用电话总机</text>
<text x="340.0" y="247.6" font-size="4.5" fill="#e8e8e8" text-anchor="middle" font-weight="bold">电气火灾监控主机</text>
<line x1="322.0" y1="252.0" x2="358.0" y2="252.0" stroke="#e8e8e8" stroke-width="0.7" />
<path d="M356.2 228.5H364M356.2 228.5V359.2H336.8" stroke="#ffd400" stroke-width="1.8" fill="none" />
<path d="M336.8 361.5H458.8V318.5H786V361.7H916.7" stroke="#ffd400" stroke-width="1.8" fill="none" />
<rect x="738.3" y="590.3" width="452.4" height="40.0" stroke="#b8b8b8" stroke-width="0.9" fill="#000" />
<text x="824.0" y="601.0" font-size="9.6" fill="#f0f0f0" text-anchor="middle" font-weight="bold">杭州市建筑设计研究院有限公司</text>
<text x="828.0" y="611.0" font-size="5.6" fill="#f0f0f0" text-anchor="middle" font-family="Liberation Mono" textLength="130" lengthAdjust="spacingAndGlyphs">HANGZHOU INSTITUTE OF ARCHITECTURAL DESIGN</text>
<text x="790.0" y="621.0" font-size="4" fill="#d0d0d0" text-anchor="start" >工程设计证书编号  A133000984</text>
<line x1="896.7" y1="590.3" x2="896.7" y2="624.0" stroke="#b8b8b8" stroke-width="0.8" />
<line x1="925.0" y1="590.3" x2="925.0" y2="624.0" stroke="#b8b8b8" stroke-width="0.8" />
<line x1="945.0" y1="603.0" x2="945.0" y2="624.0" stroke="#b8b8b8" stroke-width="0.8" />
<line x1="976.7" y1="603.0" x2="976.7" y2="624.0" stroke="#b8b8b8" stroke-width="0.8" />
<line x1="996.7" y1="603.0" x2="996.7" y2="624.0" stroke="#b8b8b8" stroke-width="0.8" />
<line x1="1020.0" y1="603.0" x2="1020.0" y2="624.0" stroke="#b8b8b8" stroke-width="0.8" />
<line x1="1043.3" y1="590.3" x2="1043.3" y2="624.0" stroke="#b8b8b8" stroke-width="0.8" />
<line x1="1055.0" y1="603.0" x2="1055.0" y2="624.0" stroke="#b8b8b8" stroke-width="0.8" />
<line x1="1070.0" y1="590.3" x2="1070.0" y2="624.0" stroke="#b8b8b8" stroke-width="0.8" />
<line x1="1134.3" y1="603.0" x2="1134.3" y2="624.0" stroke="#b8b8b8" stroke-width="0.8" />
<line x1="1155.0" y1="603.0" x2="1155.0" y2="624.0" stroke="#b8b8b8" stroke-width="0.8" />
<line x1="896.7" y1="603.0" x2="1190.7" y2="603.0" stroke="#b8b8b8" stroke-width="0.8" />
<line x1="896.7" y1="613.7" x2="1043.3" y2="613.7" stroke="#b8b8b8" stroke-width="0.8" />
<line x1="1134.3" y1="613.7" x2="1190.7" y2="613.7" stroke="#b8b8b8" stroke-width="0.8" />
<text x="911.0" y="599.0" font-size="4.5" fill="#e8e8e8" text-anchor="middle" >建设单位</text>
<text x="984.0" y="599.0" font-size="5.5" fill="#f0e000" text-anchor="middle" font-weight="bold">河间市教育体育局</text>
<text x="1056.0" y="599.0" font-size="4.5" fill="#e8e8e8" text-anchor="middle" >工程名称</text>
<text x="1130.0" y="599.0" font-size="5.5" fill="#f0e000" text-anchor="middle" font-weight="bold">河间市卧佛堂中学改扩建项目 教学楼</text>
<text x="911.0" y="610.0" font-size="4.5" fill="#e8e8e8" text-anchor="middle" >审 核</text>
<text x="935.0" y="610.0" font-size="5" fill="#f0e000" text-anchor="middle" >高景祥</text>
<text x="960.0" y="610.0" font-size="7" fill="#f0e000" text-anchor="middle" font-style="italic">高景祥</text>
<text x="987.0" y="610.0" font-size="4.5" fill="#e8e8e8" text-anchor="middle" >设 计</text>
<text x="1008.0" y="610.0" font-size="5" fill="#f0e000" text-anchor="middle" >张 昊</text>
<text x="1032.0" y="610.0" font-size="7" fill="#e8e8e8" text-anchor="middle" >张昊</text>
<text x="911.0" y="621.0" font-size="4.5" fill="#e8e8e8" text-anchor="middle" >审 定</text>
<text x="935.0" y="621.0" font-size="5" fill="#f0e000" text-anchor="middle" >田宝东</text>
<text x="960.0" y="621.0" font-size="6" fill="#2060e0" text-anchor="middle" font-style="italic">田宝东</text>
<text x="987.0" y="621.0" font-size="4.5" fill="#e8e8e8" text-anchor="middle" >制 图</text>
<text x="1008.0" y="621.0" font-size="5" fill="#f0e000" text-anchor="middle" >张 昊</text>
<text x="1032.0" y="621.0" font-size="7" fill="#e8e8e8" text-anchor="middle" >张昊</text>
<text x="1100.0" y="619.0" font-size="5" fill="#e8e8e8" text-anchor="middle" >首层消防平面图</text>
<text x="1145.0" y="609.0" font-size="4.5" fill="#e8e8e8" text-anchor="middle" >日 期</text>
<text x="1172.0" y="609.0" font-size="4.5" fill="#f0e000" text-anchor="middle" >2023.06.08</text>
<text x="1145.0" y="620.0" font-size="4.5" fill="#e8e8e8" text-anchor="middle" >图 号</text>
<text x="1172.0" y="620.0" font-size="5" fill="#e8e8e8" text-anchor="middle" >电施-3</text>
<text x="624.0" y="590.0" font-size="5.5" fill="#e8e8e8" text-anchor="middle" >教学楼首层消防平面图</text>
</g>
</svg>
<div id="panel"><div class="hd">测量</div><div class="cl">×</div>
<div class="row" style="top:20.50px;border-top-color:transparent;"><svg width="14" height="14" viewBox="0 0 14 14"><path d="M2 2l10 10M1 4l3-3M10 13l3-3" stroke="#3aa8e8" stroke-width="1.1" fill="none"/><circle cx="4" cy="4" r="1" fill="#3aa8e8"/><circle cx="10" cy="10" r="1" fill="#3aa8e8"/></svg>对齐</div>
<div class="row" style="top:40.35px;"><svg width="14" height="14" viewBox="0 0 14 14"><path d="M1 3v8M13 3v8M1 7h12" stroke="#3aa8e8" stroke-width="1.1" fill="none"/><circle cx="3.5" cy="7" r="1" fill="#3aa8e8"/><circle cx="10.5" cy="7" r="1" fill="#3aa8e8"/></svg>线性</div>
<div class="row" style="top:60.20px;"><svg width="14" height="14" viewBox="0 0 14 14"><path d="M2 3l10 5v4H2z" fill="#9bd0f0" stroke="#3aa8e8" stroke-width="1"/><path d="M1 13h12" stroke="#3aa8e8"/></svg>面积</div>
<div class="row" style="top:80.05px;"><svg width="14" height="14" viewBox="0 0 14 14"><rect x="1" y="2" width="12" height="8" fill="#9bd0f0" stroke="#3aa8e8" stroke-width="1"/><path d="M1 12.5h12" stroke="#3aa8e8"/></svg>矩形面积</div>
<div class="row" style="top:99.90px;"><svg width="14" height="14" viewBox="0 0 14 14"><path d="M2 12L8 2M4 8h8M6 5h6" stroke="#3aa8e8" stroke-width="1" fill="none"/><rect x="1" y="10" width="4" height="3" fill="none" stroke="#3aa8e8"/></svg>坐标标注</div>
<div class="row" style="top:119.75px;"><svg width="14" height="14" viewBox="0 0 14 14"><rect x="1" y="2" width="14" height="4" fill="#9bd0f0"/><rect x="1" y="8" width="14" height="5" fill="none" stroke="#3aa8e8"/><path d="M3 8v2M6 8v2M9 8v2M12 8v2" stroke="#3aa8e8"/></svg>设置标注比例</div>
<div class="row" style="top:139.60px;"><svg width="14" height="14" viewBox="0 0 14 14"><path d="M3 13V9a6 6 0 0 1 6-6h3" stroke="#c9a253" stroke-width="1.5" fill="none"/><circle cx="3" cy="12" r="1.3" fill="#c9a253"/><circle cx="12" cy="3" r="1.3" fill="#c9a253"/></svg>弧长</div>
<div class="row" style="top:159.45px;"><svg width="14" height="14" viewBox="0 0 14 14"><path d="M1 3l6 5 7-5M7 8v5" stroke="#c9a253" stroke-width="1.5" fill="none"/></svg>点到直线的距离</div>
<div class="row" style="top:179.30px;"><svg width="14" height="14" viewBox="0 0 14 14"><path d="M3 3l-1 7 6 3 5-3" stroke="#c9a253" stroke-width="1.3" fill="none"/><circle cx="3" cy="3" r="1.5" fill="#c9a253"/><circle cx="8" cy="13" r="1.5" fill="#c9a253"/><circle cx="13" cy="10" r="1.5" fill="#c9a253"/></svg>连续测量</div>
<div class="row" style="top:199.15px;"><svg width="14" height="14" viewBox="0 0 14 14"><rect x="1.5" y="2" width="12" height="10" fill="none" stroke="#c9a253" stroke-dasharray="2 1.2"/><path d="M4 6h6M4 9h4" stroke="#c9a253"/></svg>批量测量</div>
<div class="row" style="top:219.00px;"><svg width="14" height="14" viewBox="0 0 14 14"><path d="M2 9l4-6h7v8H6z" fill="none" stroke="#c9a253" stroke-width="1.3"/><circle cx="9" cy="7" r="2" fill="none" stroke="#c9a253"/></svg>查看分段长度</div>
<div class="row" style="top:238.85px;"><svg width="14" height="14" viewBox="0 0 14 14"><path d="M1 8l6-6 7 7-6 6z" fill="none" stroke="#c9a253" stroke-width="1.3"/><path d="M4 8l3 3 4-5" stroke="#c9a253" fill="none"/></svg>修改单个标注属性</div>
<div class="row" style="top:258.70px;"><svg width="14" height="14" viewBox="0 0 14 14"><path d="M2 12l3-9h8l-3 9z" fill="none" stroke="#c9a253" stroke-width="1.3"/><path d="M4 10l6-6M6 11l5-5" stroke="#c9a253"/></svg>面积(含弧线)</div>
<div class="row" style="top:278.55px;"><svg width="14" height="14" viewBox="0 0 14 14"><path d="M2 7a6 5 0 0 1 12 0a6 5 0 0 1-12 0z" fill="none" stroke="#c9a253" stroke-width="1.3"/><path d="M4 8l5-4M6 10l5-4" stroke="#c9a253"/></svg>测量填充面积</div>
<div class="row" style="top:298.40px;"><svg width="14" height="14" viewBox="0 0 14 14"><path d="M2 4h8v9H2zM2 4l3-3h8v9l-3 3" fill="none" stroke="#c9a253" stroke-width="1.2"/><path d="M4 10l4-4" stroke="#c9a253"/></svg>计算侧面积</div>
<div class="row" style="top:318.25px;"><svg width="14" height="14" viewBox="0 0 14 14"><path d="M1 2h12v11H1z" fill="none" stroke="#c9a253" stroke-width="1.2"/><rect x="4" y="5" width="6" height="5" fill="none" stroke="#c9a253"/></svg>面积偏移</div>
<div class="row" style="top:338.10px;"><svg width="14" height="14" viewBox="0 0 14 14"><path d="M7 1l6 6-6 6-6-6z" fill="none" stroke="#c9a253" stroke-width="1.3"/><path d="M4 7l3-3M5 9l4-4" stroke="#c9a253"/></svg>测量圆</div>
<div class="row" style="top:357.95px;"><svg width="14" height="14" viewBox="0 0 14 14"><circle cx="7" cy="7" r="5.8" fill="none" stroke="#c9a253" stroke-width="1.3"/><path d="M7 7L4 4M4 4h2.5M4 4v2.5" stroke="#c9a253" fill="none"/></svg>半径</div>
<div class="row" style="top:377.80px;"><svg width="14" height="14" viewBox="0 0 14 14"><path d="M1 12h12L8 3z" fill="none" stroke="#c9a253" stroke-width="1.4"/><circle cx="2" cy="12" r="1.6" fill="#c9a253"/></svg>测量角度</div>
<div class="row" style="top:397.65px;"><svg width="14" height="14" viewBox="0 0 14 14"><rect x="1" y="1" width="12" height="12" fill="none" stroke="#c9a253" stroke-width="1.2"/><path d="M3 5l2-2 2 2 2-2M3 7h6M3 10.5h8" fill="none" stroke="#c9a253"/></svg>测量统计</div>
<div style="position:absolute;left:21px;top:203.8px;width:61px;height:12px;border:1.2px solid #ee4b55"></div>
</div>
<div id="banner">点击左键或拉框选择要测量的线段，右键完成测量</div>
<div id="dlg"><div class="tt"></div>
<svg width="148" height="95" style="position:absolute;left:0;top:0">
<rect x="5" y="4.5" width="12" height="11" rx="1" fill="#1f5fb0" stroke="#4a5a70" stroke-width="0.8"/>
<text x="11" y="12.5" font-size="5" fill="#fff" text-anchor="middle" font-family="Liberation Sans" font-weight="bold">CAD</text>
<text x="21.5" y="14" font-size="9.5" fill="#222" font-family="Liberation Sans">批量测量设置</text>
<path d="M132 6.5l7 7M139 6.5l-7 7" stroke="#222" stroke-width="1"/>
<circle cx="12.5" cy="35" r="4.3" fill="#fff" stroke="#1565c0" stroke-width="2.6"/>
<text x="22" y="39" font-size="10" fill="#333">选择线段</text>
<rect x="16.8" y="42.2" width="114.2" height="19.6" fill="none" stroke="#ee4b55" stroke-width="1.2"/>
<rect x="19.3" y="46" width="10" height="9.6" rx="1.5" fill="#1a66c2"/>
<path d="M21.8 51l1.8 1.8 3.5-3.5" stroke="#fff" stroke-width="0.9" fill="none"/>
<text x="34" y="54.8" font-size="9" fill="#333">按已选线段的图层过滤</text>
<circle cx="12.5" cy="66.6" r="4.6" fill="#fff" stroke="#888" stroke-width="0.8"/>
<text x="22" y="70.5" font-size="10" fill="#333">画线</text>
<text x="8" y="84.5" font-size="9" fill="#444">总长度：</text>
<text x="47.6" y="84.5" font-size="9" fill="#ee3344" font-family="Liberation Sans">60754</text>
</svg></div>
<div id="bt"><svg width="266" height="23" style="position:absolute;left:0;top:0">
<g fill="none" stroke="#e8e8e8" stroke-width="0.9"><circle cx="8.5" cy="9" r="2.3"/><circle cx="13.5" cy="9" r="2.3"/><circle cx="8.5" cy="14" r="2.3"/><circle cx="13.5" cy="14" r="2.3"/></g>
<line x1="24.4" y1="3" x2="24.4" y2="20" stroke="#5a5a5a"/>
<text x="26" y="15.5" font-size="9.5" fill="#c8c8c8">标注分类</text>
<rect x="66.5" y="1.5" width="111" height="20" fill="#626262" stroke="#3e3e3e" stroke-width="1"/>
<rect x="70" y="6" width="10.5" height="10.5" fill="#e55300" stroke="#333" stroke-width="0.8"/>
<text x="82.5" y="15.5" font-size="9.5" fill="#cccccc">未分类</text>
<path d="M171 10h4l-2 2.6z" fill="#eee"/>
<g fill="none" stroke="#e0e0e0" stroke-width="0.9">
<path d="M186 8v8.5h10V12M188 6h5M196 6.5l-5 5-1 1.5 1.5-1 5-5z"/>
<path d="M212.5 6v11M207 11.5h11M210.5 8l2-2 2 2M210.5 15l2 2 2-2M209 9.5l-2 2 2 2M216 9.5l2 2-2 2"/>
<rect x="228.5" y="8" width="8" height="9" rx="1.5"/><path d="M231 8V6.5a1 1 0 0 1 1-1h6a1 1 0 0 1 1 1V14a1 1 0 0 1-1 1h-1.5"/>
<path d="M253 15h-3.5V7.5a1.5 1.5 0 0 1 1.5-1.5h6a1.5 1.5 0 0 1 1.5 1.5V10"/><rect x="254" y="11" width="7" height="6.5" rx="1"/>
</g></svg></div>
<svg width="1267" height="634" style="position:absolute;left:0;top:0;pointer-events:none"><line x1="318" y1="46" x2="92" y2="248" stroke="#ee4444" stroke-width="1.8"/><path d="M85.1 254.6L89.4 243.2L97 250.8Z" fill="#ee4444"/><line x1="107.8" y1="268.8" x2="997" y2="138.9" stroke="#ee4444" stroke-width="1.8"/><path d="M1006.9 137.4L995.3 134.2L996.5 144.3Z" fill="#ee4444"/></svg>
<div id="btabs">
<svg width="1267" height="10" style="position:absolute;left:0;top:0">
<path d="M0 0H52.4L50 10H2.5z" fill="#000"/>
<path d="M52.4 0L55.5 10M103.5 0L101 10M103.5 0L106 10M156.5 0L154 10" stroke="#333" stroke-width="0.8" fill="none"/>
<text x="27" y="12" font-size="10" fill="#d8d8d8" text-anchor="middle">模型</text>
<text x="79" y="12" font-size="10" fill="#333" text-anchor="middle">布局1</text>
<text x="131" y="12" font-size="10" fill="#333" text-anchor="middle">布局2</text>
</svg></div>
